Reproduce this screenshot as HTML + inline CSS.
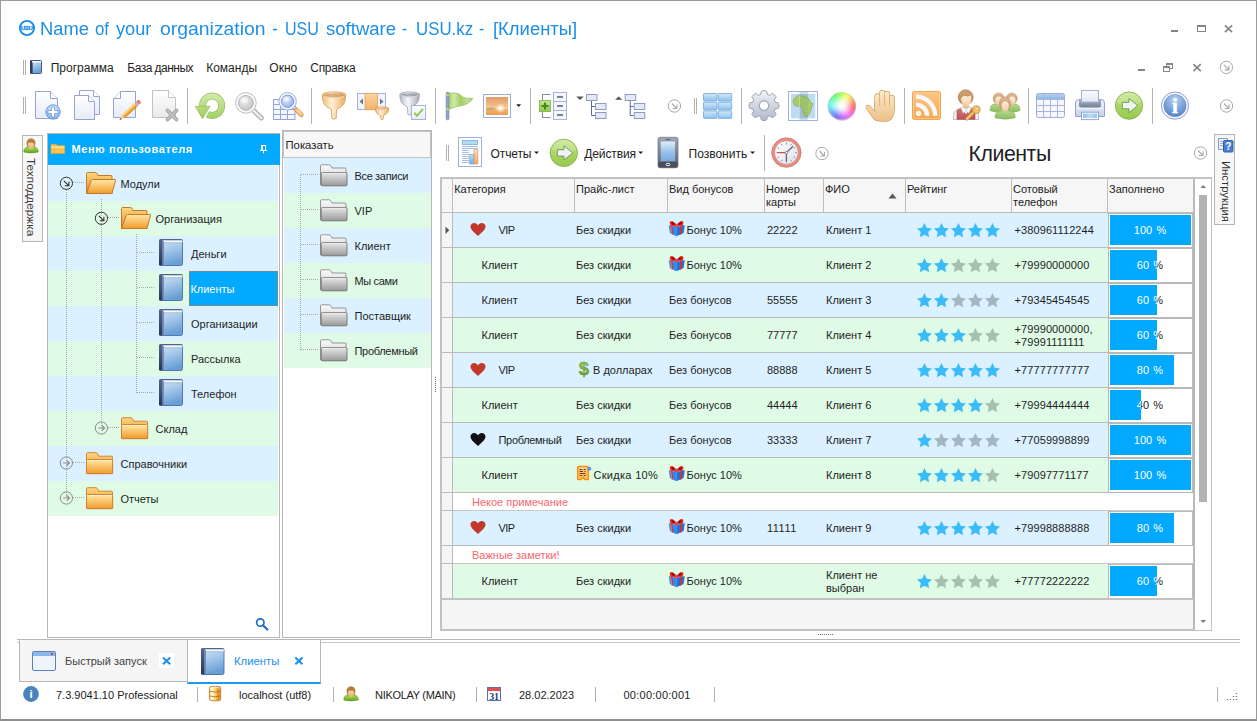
<!DOCTYPE html>
<html lang="ru">
<head>
<meta charset="utf-8">
<title>USU software - Клиенты</title>
<style>
*{box-sizing:border-box;margin:0;padding:0}
html,body{width:1257px;height:721px;overflow:hidden;background:#fff}
body{position:relative;font-family:"Liberation Sans",sans-serif;font-size:11px;color:#222;line-height:13px}
.a{position:absolute}
.t{position:absolute;white-space:nowrap}
svg{position:absolute;overflow:visible}
#win{left:0;top:0;width:1257px;height:721px;border:1px solid #9b9b9b;border-bottom:2px solid #8f8f8f}
#title{left:39.6px;top:17px;font-size:18.9px;line-height:24px;color:#1c8fe8}
.menu{top:61px;font-size:12px;line-height:14px;color:#1e1e1e}
.vsep{position:absolute;width:1px;background:#b4b4b4}
.grip{position:absolute;width:3px;border-left:1px solid #b0b0b0;border-right:1px solid #b0b0b0}
.tr{position:absolute;left:48px;width:230px;height:35px}
.bl{background:#dbf1ff}
.gr{background:#dffbe5}
.tl{position:absolute;white-space:nowrap;font-size:11px;line-height:13px;color:#1e1e1e}
.sr{position:absolute;left:284px;width:147px;height:35px}
.gh{position:absolute;top:180px;height:33px;background:#f6f6f6;border-right:1px solid #bdbdbd;border-bottom:1px solid #bdbdbd}
.gh span{position:absolute;left:2px;top:3px;font-size:11px;line-height:13px;color:#222;white-space:nowrap}
.row{position:absolute;left:453px;width:741px;border-bottom:1px solid #bbbbbb}
.ind{position:absolute;left:442px;width:11px;background:#f5f5f5;border-right:1px solid #bbbbbb;border-bottom:1px solid #bbbbbb}
.c{position:absolute;white-space:nowrap;font-size:11px;line-height:13px;color:#1e1e1e}
.pc{position:absolute;left:1108px;width:87px;background:#fff;border-left:1px solid #b9b9b9;border-right:3px solid #b9b9b9;border-top:1px solid #b9b9b9}
.pf{position:absolute;left:1110px;height:30px;background:#03a8ff;overflow:hidden}
.pt{position:absolute;left:1109.5px;width:81px;text-align:center;font-size:11px;line-height:13px;color:#222;white-space:nowrap;word-spacing:1.2px}
.pf .pt{left:-.5px;color:#fff}
.note{position:absolute;left:472px;color:#f8666c;font-size:11px;line-height:13px;white-space:nowrap}
.sb{top:687px;font-size:11px;line-height:13px;color:#222}
</style>
</head>
<body>
<div id="win" class="a"></div>
<div id="title" class="t" style="width:540px;height:24px"><span style="position:absolute;left:0.13px;top:0;transform:scaleX(0.9696);transform-origin:0 0">Name</span> <span style="position:absolute;left:55.20px;top:0;transform:scaleX(0.8906);transform-origin:0 0">of</span> <span style="position:absolute;left:76.60px;top:0;transform:scaleX(0.9628);transform-origin:0 0">your</span> <span style="position:absolute;left:120.30px;top:0;transform:scaleX(1.0262);transform-origin:0 0">organization</span> <span style="position:absolute;left:232.10px;top:0;transform:scaleX(0.9333);transform-origin:0 0">-</span> <span style="position:absolute;left:245.15px;top:0;transform:scaleX(0.8498);transform-origin:0 0">USU</span> <span style="position:absolute;left:286.40px;top:0;transform:scaleX(0.9818);transform-origin:0 0">software</span> <span style="position:absolute;left:362.40px;top:0;transform:scaleX(0.8333);transform-origin:0 0">-</span> <span style="position:absolute;left:375.91px;top:0;transform:scaleX(0.8917);transform-origin:0 0">USU.kz</span> <span style="position:absolute;left:439.80px;top:0;transform:scaleX(0.8333);transform-origin:0 0">-</span> <span style="position:absolute;left:453.02px;top:0;transform:scaleX(0.9751);transform-origin:0 0">[Клиенты]</span></div>
<div class="grip" style="left:23px;top:60px;height:15px"></div>
<div class="t menu" style="left:50.7px;top:61px;">Программа</div>
<div class="t menu" style="left:127.3px;top:61px;letter-spacing:-.5px;word-spacing:-.2px">База данных</div>
<div class="t menu" style="left:206.2px;top:61px;">Команды</div>
<div class="t menu" style="left:269.3px;top:61px;">Окно</div>
<div class="t menu" style="left:310.3px;top:61px;letter-spacing:-.3px">Справка</div>
<div class="grip" style="left:23px;top:97px;height:17px"></div>
<div class="grip" style="left:694px;top:98px;height:16px"></div>
<div class="vsep" style="left:187px;top:88px;height:36px"></div>
<div class="vsep" style="left:311px;top:88px;height:36px"></div>
<div class="vsep" style="left:435px;top:88px;height:36px"></div>
<div class="vsep" style="left:530px;top:88px;height:36px"></div>
<div class="vsep" style="left:741px;top:88px;height:36px"></div>
<div class="vsep" style="left:904px;top:88px;height:36px"></div>
<div class="vsep" style="left:1028px;top:88px;height:36px"></div>
<div class="vsep" style="left:1152px;top:88px;height:36px"></div>
<div class="a" style="left:22px;top:135px;width:21px;height:107px;border:1px solid #b4b4b4;background:#f7f7f7"></div>
<div class="t" style="left:20px;top:158px;width:21px;height:80px;writing-mode:vertical-rl;font-size:11.800px;line-height:21px;color:#3c3c3c">Техподдержка</div>
<div class="a" style="left:47px;top:133px;width:233px;height:505px;border:1px solid #b7b7b7;background:#fff"></div>
<div class="a" style="left:48px;top:134px;width:232px;height:31px;background:#03a8ff"></div>
<div class="t " style="left:71.5px;top:142.5px;color:#fff;font-weight:bold;font-size:11px;line-height:13px;letter-spacing:.62px">Меню пользователя</div>
<div class="tr bl" style="top:166px"></div>
<div class="tr gr" style="top:201px"></div>
<div class="tr bl" style="top:236px"></div>
<div class="tr gr" style="top:271px"></div>
<div class="tr bl" style="top:306px"></div>
<div class="tr gr" style="top:341px"></div>
<div class="tr bl" style="top:376px"></div>
<div class="tr gr" style="top:411px"></div>
<div class="tr bl" style="top:446px"></div>
<div class="tr gr" style="top:481px"></div>
<div class="tl" style="left:120.5px;top:178px">Модули</div>
<div class="tl" style="left:155.5px;top:213px">Организация</div>
<div class="tl" style="left:191px;top:248px">Деньги</div>
<div class="a" style="left:189px;top:271px;width:89px;height:35px;background:#03a8ff;border:1px dotted #e8641c"></div>
<div class="tl" style="left:190.4px;top:283px;color:#fff">Клиенты</div>
<div class="tl" style="left:191px;top:318px">Организации</div>
<div class="tl" style="left:191px;top:353px">Рассылка</div>
<div class="tl" style="left:191px;top:388px">Телефон</div>
<div class="tl" style="left:155.5px;top:423px">Склад</div>
<div class="tl" style="left:120.5px;top:458px">Справочники</div>
<div class="tl" style="left:120.5px;top:493px">Отчеты</div>
<div class="a" style="left:282px;top:130px;width:150px;height:508px;border:1px solid #b7b7b7;background:#fff"></div>
<div class="a" style="left:283px;top:131px;width:148px;height:27px;border:1px solid #c4c4c4;background:#f7f7f7"></div>
<div class="t " style="left:285.5px;top:139px;font-size:11.300px;line-height:13px;color:#222">Показать</div>
<div class="sr bl" style="top:158px"></div>
<div class="sr gr" style="top:193px"></div>
<div class="sr bl" style="top:228px"></div>
<div class="sr gr" style="top:263px"></div>
<div class="sr bl" style="top:298px"></div>
<div class="sr gr" style="top:333px"></div>
<div class="tl" style="left:354.500px;top:170px;letter-spacing:-.3px;word-spacing:-.2px">Все записи</div>
<div class="tl" style="left:354.500px;top:205px;">VIP</div>
<div class="tl" style="left:354.500px;top:240px;">Клиент</div>
<div class="tl" style="left:354.500px;top:275px;letter-spacing:-.3px;word-spacing:-.2px">Мы сами</div>
<div class="tl" style="left:354.500px;top:310px;">Поставщик</div>
<div class="tl" style="left:354.500px;top:345px;letter-spacing:-.3px;word-spacing:-.2px">Проблемный</div>
<div class="grip" style="left:446px;top:145px;height:16px"></div>
<div class="t " style="left:490.5px;top:146.5px;font-size:12px;line-height:14px;color:#222;letter-spacing:-.1px">Отчеты</div>
<div class="t " style="left:584.3px;top:146.5px;font-size:12px;line-height:14px;color:#222;letter-spacing:-.12px">Действия</div>
<div class="t " style="left:688.5px;top:146.5px;font-size:12px;line-height:14px;color:#222">Позвонить</div>
<div class="vsep" style="left:764px;top:135px;height:36px"></div>
<div class="t " style="left:968.5px;top:141px;font-size:21.300px;line-height:26px;color:#222;letter-spacing:-.45px">Клиенты</div>
<div class="a" style="left:1214px;top:134px;width:21px;height:91px;border:1px solid #b4b4b4;background:#f7f7f7"></div>
<div class="t" style="left:1215px;top:161px;width:21px;height:70px;writing-mode:vertical-rl;font-size:11.3px;line-height:21px;color:#333">Инструкция</div>
<div class="a" style="left:440px;top:177px;width:772px;height:454px;border:2px solid #c2c2c2;border-right-width:1px;background:#f5f5f5"></div>
<div class="a" style="left:442px;top:179px;width:11px;height:34px;background:#f6f6f6;border-right:1px solid #bdbdbd;border-bottom:1px solid #bdbdbd"></div>
<div class="gh" style="left:453px;width:122px;top:179px;height:34px"><span style="top:4px;left:1.2px">Категория</span></div>
<div class="gh" style="left:575px;width:93px;top:179px;height:34px"><span style="top:4px;left:1px">Прайс-лист</span></div>
<div class="gh" style="left:668px;width:97px;top:179px;height:34px"><span style="top:4px;left:1px">Вид бонусов</span></div>
<div class="gh" style="left:765px;width:59px;top:179px;height:34px"><span style="top:4px;left:1px">Номер<br>карты</span></div>
<div class="gh" style="left:824px;width:82px;top:179px;height:34px"><span style="top:4px;left:1px">ФИО</span></div>
<div class="gh" style="left:906px;width:106px;top:179px;height:34px"><span style="top:4px;left:1px">Рейтинг</span></div>
<div class="gh" style="left:1012px;width:96px;top:179px;height:34px"><span style="top:4px;left:1px">Сотовый<br>телефон</span></div>
<div class="gh" style="left:1108px;width:87px;top:179px;height:34px"><span style="top:4px;left:1px">Заполнено</span></div>
<div class="a" style="left:1195px;top:179px;width:16px;height:451px;background:#fff"></div>
<div class="a" style="left:1199px;top:195px;width:8px;height:307px;background:#b2b2b2"></div>
<div class="row bl" style="top:213px;height:35px"></div>
<div class="ind" style="top:213px;height:35px"></div>
<div class="c" style="left:498.5px;top:224px;letter-spacing:-.6px">VIP</div>
<div class="c" style="left:576px;top:224px;">Без скидки</div>
<div class="c" style="left:686.5px;top:224px">Бонус 10%</div>
<div class="c" style="left:767px;top:224px;">22222</div>
<div class="c" style="left:826px;top:224px">Клиент 1</div>
<div class="c" style="left:1014.500px;top:224px;letter-spacing:.1px">+380961112244</div>
<div class="pc" style="top:213px;height:35px;border-bottom:1px solid #b9b9b9"></div>
<div class="pt" style="top:224px">100 %</div>
<div class="pf" style="top:215px;width:81px"><div class="pt" style="top:9px">100 %</div></div>
<div class="row gr" style="top:248px;height:35px"></div>
<div class="ind" style="top:248px;height:35px"></div>
<div class="c" style="left:481.5px;top:259px;">Клиент</div>
<div class="c" style="left:576px;top:259px;">Без скидки</div>
<div class="c" style="left:686.5px;top:259px">Бонус 10%</div>
<div class="c" style="left:767px;top:259px;"></div>
<div class="c" style="left:826px;top:259px">Клиент 2</div>
<div class="c" style="left:1014.500px;top:259px;letter-spacing:.1px">+79990000000</div>
<div class="pc" style="top:248px;height:35px;border-bottom:1px solid #b9b9b9"></div>
<div class="pt" style="top:259px">60 %</div>
<div class="pf" style="top:250px;width:47.2px"><div class="pt" style="top:9px">60 %</div></div>
<div class="row bl" style="top:283px;height:35px"></div>
<div class="ind" style="top:283px;height:35px"></div>
<div class="c" style="left:481.5px;top:294px;">Клиент</div>
<div class="c" style="left:576px;top:294px;">Без скидки</div>
<div class="c" style="left:669px;top:294px">Без бонусов</div>
<div class="c" style="left:767px;top:294px;">55555</div>
<div class="c" style="left:826px;top:294px">Клиент 3</div>
<div class="c" style="left:1014.500px;top:294px;letter-spacing:.1px">+79345454545</div>
<div class="pc" style="top:283px;height:35px;border-bottom:1px solid #b9b9b9"></div>
<div class="pt" style="top:294px">60 %</div>
<div class="pf" style="top:285px;width:47.2px"><div class="pt" style="top:9px">60 %</div></div>
<div class="row gr" style="top:318px;height:35px"></div>
<div class="ind" style="top:318px;height:35px"></div>
<div class="c" style="left:481.5px;top:329px;">Клиент</div>
<div class="c" style="left:576px;top:329px;">Без скидки</div>
<div class="c" style="left:669px;top:329px">Без бонусов</div>
<div class="c" style="left:767px;top:329px;">77777</div>
<div class="c" style="left:826px;top:329px">Клиент 4</div>
<div class="c" style="left:1014.500px;top:323px;letter-spacing:.1px">+79990000000,<br>+79991111111</div>
<div class="pc" style="top:318px;height:35px;border-bottom:1px solid #b9b9b9"></div>
<div class="pt" style="top:329px">60 %</div>
<div class="pf" style="top:320px;width:47.2px"><div class="pt" style="top:9px">60 %</div></div>
<div class="row bl" style="top:353px;height:35px"></div>
<div class="ind" style="top:353px;height:35px"></div>
<div class="c" style="left:498.5px;top:364px;letter-spacing:-.6px">VIP</div>
<div class="c" style="left:593px;top:364px;">В долларах</div>
<div class="c" style="left:669px;top:364px">Без бонусов</div>
<div class="c" style="left:767px;top:364px;">88888</div>
<div class="c" style="left:826px;top:364px">Клиент 5</div>
<div class="c" style="left:1014.500px;top:364px;letter-spacing:.1px">+77777777777</div>
<div class="pc" style="top:353px;height:35px;border-bottom:1px solid #b9b9b9"></div>
<div class="pt" style="top:364px">80 %</div>
<div class="pf" style="top:355px;width:63.9px"><div class="pt" style="top:9px">80 %</div></div>
<div class="row gr" style="top:388px;height:35px"></div>
<div class="ind" style="top:388px;height:35px"></div>
<div class="c" style="left:481.5px;top:399px;">Клиент</div>
<div class="c" style="left:576px;top:399px;">Без скидки</div>
<div class="c" style="left:669px;top:399px">Без бонусов</div>
<div class="c" style="left:767px;top:399px;">44444</div>
<div class="c" style="left:826px;top:399px">Клиент 6</div>
<div class="c" style="left:1014.500px;top:399px;letter-spacing:.1px">+79994444444</div>
<div class="pc" style="top:388px;height:35px;border-bottom:1px solid #b9b9b9"></div>
<div class="pt" style="top:399px">40 %</div>
<div class="pf" style="top:390px;width:30.5px"><div class="pt" style="top:9px">40 %</div></div>
<div class="row bl" style="top:423px;height:35px"></div>
<div class="ind" style="top:423px;height:35px"></div>
<div class="c" style="left:498.5px;top:434px;letter-spacing:-.32px">Проблемный</div>
<div class="c" style="left:576px;top:434px;">Без скидки</div>
<div class="c" style="left:669px;top:434px">Без бонусов</div>
<div class="c" style="left:767px;top:434px;">33333</div>
<div class="c" style="left:826px;top:434px">Клиент 7</div>
<div class="c" style="left:1014.500px;top:434px;letter-spacing:.1px">+77059998899</div>
<div class="pc" style="top:423px;height:35px;border-bottom:1px solid #b9b9b9"></div>
<div class="pt" style="top:434px">100 %</div>
<div class="pf" style="top:425px;width:81px"><div class="pt" style="top:9px">100 %</div></div>
<div class="row gr" style="top:458px;height:35px"></div>
<div class="ind" style="top:458px;height:35px"></div>
<div class="c" style="left:481.5px;top:469px;">Клиент</div>
<div class="c" style="left:593.5px;top:469px;letter-spacing:.3px">Скидка 10%</div>
<div class="c" style="left:686.5px;top:469px">Бонус 10%</div>
<div class="c" style="left:767px;top:469px;"></div>
<div class="c" style="left:826px;top:469px">Клиент 8</div>
<div class="c" style="left:1014.500px;top:469px;letter-spacing:.1px">+79097771177</div>
<div class="pc" style="top:458px;height:35px;border-bottom:1px solid #b9b9b9"></div>
<div class="pt" style="top:469px">100 %</div>
<div class="pf" style="top:460px;width:81px"><div class="pt" style="top:9px">100 %</div></div>
<div class="a" style="left:453px;top:493px;width:741px;height:18px;background:#fff;border-bottom:1px solid #c8c8c8"></div>
<div class="ind" style="top:493px;height:18px"></div>
<div class="note" style="top:496px">Некое примечание</div>
<div class="row bl" style="top:511px;height:35px"></div>
<div class="ind" style="top:511px;height:35px"></div>
<div class="c" style="left:498.5px;top:522px;letter-spacing:-.6px">VIP</div>
<div class="c" style="left:576px;top:522px;">Без скидки</div>
<div class="c" style="left:686.5px;top:522px">Бонус 10%</div>
<div class="c" style="left:767px;top:522px;letter-spacing:.5px">11111</div>
<div class="c" style="left:826px;top:522px">Клиент 9</div>
<div class="c" style="left:1014.500px;top:522px;letter-spacing:.1px">+79998888888</div>
<div class="pc" style="top:511px;height:35px;border-bottom:1px solid #b9b9b9"></div>
<div class="pt" style="top:522px">80 %</div>
<div class="pf" style="top:513px;width:63.9px"><div class="pt" style="top:9px">80 %</div></div>
<div class="a" style="left:453px;top:546px;width:741px;height:18px;background:#fff;border-bottom:1px solid #c8c8c8"></div>
<div class="ind" style="top:546px;height:18px"></div>
<div class="note" style="top:549px">Важные заметки!</div>
<div class="row gr" style="top:564px;height:35px"></div>
<div class="ind" style="top:564px;height:35px"></div>
<div class="c" style="left:481.5px;top:575px;">Клиент</div>
<div class="c" style="left:576px;top:575px;">Без скидки</div>
<div class="c" style="left:686.5px;top:575px">Бонус 10%</div>
<div class="c" style="left:767px;top:575px;"></div>
<div class="c" style="left:826px;top:569px">Клиент не<br>выбран</div>
<div class="c" style="left:1014.500px;top:575px;letter-spacing:.1px">+77772222222</div>
<div class="pc" style="top:564px;height:35px;border-bottom:1px solid #b9b9b9"></div>
<div class="pt" style="top:575px">60 %</div>
<div class="pf" style="top:566px;width:47.2px"><div class="pt" style="top:9px">60 %</div></div>
<div class="a" style="left:1193px;top:179px;width:2px;height:450px;background:#b9b9b9"></div>
<div class="a" style="left:442px;top:598px;width:752px;height:2px;background:#c2c2c2"></div>
<div class="a" style="left:17px;top:639px;width:1223px;height:4px;border-top:1px solid #b8b8b8;border-bottom:1px solid #c8c8c8;background:#fff"></div>
<div class="a" style="left:19px;top:639px;width:169px;height:43px;background:#f5f5f5;border:1px solid #b8b8b8"></div>
<div class="a" style="left:187px;top:639px;width:134px;height:45px;background:#fff;border-top:1px solid #b8b8b8;border-left:1px solid #b8b8b8;border-right:1px solid #b8b8b8;border-bottom:2px solid #1c9af0"></div>
<div class="t " style="left:65px;top:655px;font-size:11px;line-height:13px;color:#444">Быстрый запуск</div>
<div class="a" style="left:159px;top:653px;width:15px;height:15px;background:#fff"></div>
<div class="t " style="left:234px;top:655px;font-size:11.300px;line-height:13px;color:#1c8fe8">Клиенты</div>
<div class="t sb" style="left:56px;top:688.5px;">7.3.9041.10 Professional</div>
<div class="vsep" style="left:197px;top:687px;height:15px;background:#b0b0b0"></div>
<div class="vsep" style="left:333px;top:687px;height:15px;background:#b0b0b0"></div>
<div class="vsep" style="left:476px;top:687px;height:15px;background:#b0b0b0"></div>
<div class="vsep" style="left:595px;top:687px;height:15px;background:#b0b0b0"></div>
<div class="vsep" style="left:714px;top:687px;height:15px;background:#b0b0b0"></div>
<div class="vsep" style="left:1217px;top:687px;height:15px;background:#b0b0b0"></div>
<div class="t sb" style="left:239px;top:688.5px;">localhost (utf8)</div>
<div class="t sb" style="left:375px;top:688.5px;letter-spacing:-.3px">NIKOLAY (MAIN)</div>
<div class="t sb" style="left:519px;top:688.5px;">28.02.2023</div>
<div class="t sb" style="left:623.5px;top:688.5px;letter-spacing:.25px">00:00:00:001</div>
<svg class="a" style="left:0;top:0;pointer-events:none" width="1257" height="721" viewBox="0 0 1257 721">

<defs>
<linearGradient id="gPage" x1="0" y1="0" x2="0" y2="1"><stop offset="0" stop-color="#ffffff"/><stop offset="1" stop-color="#e6ebf8"/></linearGradient>
<linearGradient id="gPageG" x1="0" y1="0" x2="0" y2="1"><stop offset="0" stop-color="#ffffff"/><stop offset="1" stop-color="#e9e9e9"/></linearGradient>
<radialGradient id="gBall" cx="0.5" cy="0.3" r="0.7"><stop offset="0" stop-color="#e0eefc"/><stop offset="1" stop-color="#7eb2e8"/></radialGradient>
<linearGradient id="gGreen" x1="0" y1="0" x2="0" y2="1"><stop offset="0" stop-color="#bfe08a"/><stop offset="1" stop-color="#6ea92e"/></linearGradient>
<linearGradient id="gGreenB" x1="0" y1="0" x2="0" y2="1"><stop offset="0" stop-color="#c4e490"/><stop offset="0.5" stop-color="#9ccc54"/><stop offset="1" stop-color="#86bc3c"/></linearGradient>
<linearGradient id="gFold" x1="0" y1="0" x2="0" y2="1"><stop offset="0" stop-color="#ffe9a8"/><stop offset="1" stop-color="#f39a2a"/></linearGradient>
<linearGradient id="gFoldB" x1="0" y1="0" x2="0" y2="1"><stop offset="0" stop-color="#ffd780"/><stop offset="1" stop-color="#e88a1c"/></linearGradient>
<linearGradient id="gGFold" x1="0" y1="0" x2="0" y2="1"><stop offset="0" stop-color="#e6e6e6"/><stop offset="1" stop-color="#9a9a9a"/></linearGradient>
<linearGradient id="gGFoldB" x1="0" y1="0" x2="0" y2="1"><stop offset="0" stop-color="#fafafa"/><stop offset="1" stop-color="#c8c8c8"/></linearGradient>
<linearGradient id="gBook" x1="0" y1="0" x2="0.3" y2="1"><stop offset="0" stop-color="#d2e4f4"/><stop offset="0.5" stop-color="#a2c6e8"/><stop offset="1" stop-color="#6a9fd6"/></linearGradient>
<linearGradient id="gGold" x1="0" y1="0" x2="1" y2="0"><stop offset="0" stop-color="#f2bc78"/><stop offset="0.4" stop-color="#fff0d6"/><stop offset="1" stop-color="#eeac62"/></linearGradient>
<linearGradient id="gSilver" x1="0" y1="0" x2="1" y2="0"><stop offset="0" stop-color="#b4bcc6"/><stop offset="0.42" stop-color="#f6f8fa"/><stop offset="1" stop-color="#a4acb8"/></linearGradient>
<linearGradient id="gGear" x1="0" y1="0" x2="0" y2="1"><stop offset="0" stop-color="#f2f4f7"/><stop offset="1" stop-color="#b0b8c6"/></linearGradient>
<linearGradient id="gTile" x1="0" y1="0" x2="0" y2="1"><stop offset="0" stop-color="#d4e8f8"/><stop offset="1" stop-color="#8cc0ea"/></linearGradient>
<linearGradient id="gRss" x1="0" y1="0" x2="0" y2="1"><stop offset="0" stop-color="#fcc684"/><stop offset="1" stop-color="#f8a850"/></linearGradient>
<linearGradient id="gSun" x1="0" y1="0" x2="0" y2="1"><stop offset="0" stop-color="#e29c6c"/><stop offset="0.35" stop-color="#eeb280"/><stop offset="0.62" stop-color="#f8cc90"/><stop offset="0.68" stop-color="#eeb06a"/><stop offset="1" stop-color="#eaa050"/></linearGradient>
<linearGradient id="gSkin" x1="0" y1="0" x2="0" y2="1"><stop offset="0" stop-color="#fbe2bd"/><stop offset="1" stop-color="#e8b878"/></linearGradient>
<linearGradient id="gPrn" x1="0" y1="0" x2="0" y2="1"><stop offset="0" stop-color="#f0f4fb"/><stop offset="0.55" stop-color="#dce4f2"/><stop offset="1" stop-color="#c2cee6"/></linearGradient>
<radialGradient id="gInfo" cx="0.5" cy="0.25" r="0.8"><stop offset="0" stop-color="#b4d2f2"/><stop offset="1" stop-color="#4c7cc4"/></radialGradient>
<linearGradient id="gPhone" x1="0" y1="0" x2="0" y2="1"><stop offset="0" stop-color="#e0ecf8"/><stop offset="0.5" stop-color="#9cc4ec"/><stop offset="1" stop-color="#78aae0"/></linearGradient>
<linearGradient id="gTbl" x1="0" y1="0" x2="0" y2="1"><stop offset="0" stop-color="#b0d2ee"/><stop offset="1" stop-color="#86b8e6"/></linearGradient>
<radialGradient id="gLens" cx="0.4" cy="0.35" r="0.7"><stop offset="0" stop-color="#f0f0f0"/><stop offset="1" stop-color="#c2c2c2"/></radialGradient>
<radialGradient id="gLensB" cx="0.4" cy="0.35" r="0.7"><stop offset="0" stop-color="#e0eafc"/><stop offset="1" stop-color="#8cb0ee"/></radialGradient>
<radialGradient id="gWhite" cx="0.5" cy="0.5" r="0.5"><stop offset="0" stop-color="#ffffff" stop-opacity="1"/><stop offset="1" stop-color="#ffffff" stop-opacity="0"/></radialGradient>
<linearGradient id="gPhFrame" x1="0" y1="0" x2="0" y2="1"><stop offset="0" stop-color="#a0a8b4"/><stop offset="1" stop-color="#5a606e"/></linearGradient>
<linearGradient id="gClockF" x1="0" y1="0" x2="1" y2="1"><stop offset="0" stop-color="#ffffff"/><stop offset="1" stop-color="#dcdfe6"/></linearGradient>
<linearGradient id="gDb" x1="0" y1="0" x2="1" y2="0"><stop offset="0" stop-color="#f4d494"/><stop offset="0.22" stop-color="#fffbea"/><stop offset="0.55" stop-color="#fbd254"/><stop offset="0.8" stop-color="#de8c34"/><stop offset="1" stop-color="#f0aa4c"/></linearGradient>
<radialGradient id="gWheelW" cx="0.5" cy="0.5" r="0.5"><stop offset="0" stop-color="#ffffff" stop-opacity="1"/><stop offset="0.3" stop-color="#ffffff" stop-opacity=".85"/><stop offset="0.75" stop-color="#ffffff" stop-opacity=".3"/><stop offset="1" stop-color="#ffffff" stop-opacity=".05"/></radialGradient>
<linearGradient id="gFlag" x1="0" y1="0" x2="1" y2="0"><stop offset="0" stop-color="#a8d470"/><stop offset="0.22" stop-color="#d0eaa8"/><stop offset="0.5" stop-color="#a0cc64"/><stop offset="0.75" stop-color="#c0e090"/><stop offset="1" stop-color="#a4d068"/></linearGradient>
<linearGradient id="gGreenC" gradientUnits="userSpaceOnUse" x1="0" y1="93" x2="0" y2="119"><stop offset="0" stop-color="#d2ecac"/><stop offset="1" stop-color="#a2d060"/></linearGradient>
<linearGradient id="gGreenC2" gradientUnits="userSpaceOnUse" x1="0" y1="93" x2="0" y2="119"><stop offset="0" stop-color="#d2ecac"/><stop offset="1" stop-color="#9ccc58"/></linearGradient>
<linearGradient id="gHand" gradientUnits="userSpaceOnUse" x1="0" y1="90" x2="0" y2="121"><stop offset="0" stop-color="#fdeccc"/><stop offset="1" stop-color="#ecc088"/></linearGradient>
<clipPath id="cpWheel"><circle cx="841.9" cy="105.9" r="13.800"/></clipPath>
<linearGradient id="gDollar" x1="0" y1="0" x2="0" y2="1"><stop offset="0" stop-color="#a4cc6c"/><stop offset="1" stop-color="#5c9426"/></linearGradient>
<linearGradient id="gSpine" x1="0" y1="0" x2="0" y2="1"><stop offset="0" stop-color="#56668a"/><stop offset="1" stop-color="#28365a"/></linearGradient>
<linearGradient id="gBarB" x1="0" y1="0" x2="0" y2="1"><stop offset="0" stop-color="#c4e2f6"/><stop offset="1" stop-color="#6cb0e4"/></linearGradient>
<linearGradient id="gBarO" x1="0" y1="0" x2="0" y2="1"><stop offset="0" stop-color="#fde0c4"/><stop offset="1" stop-color="#f4a468"/></linearGradient>
<linearGradient id="gGreenD" x1="0" y1="0" x2="0" y2="1"><stop offset="0" stop-color="#cce898"/><stop offset="0.5" stop-color="#acd668"/><stop offset="1" stop-color="#96c84c"/></linearGradient>
<linearGradient id="gGreenP" x1="0" y1="0" x2="0" y2="1"><stop offset="0" stop-color="#a4d850"/><stop offset="0.6" stop-color="#84c232"/><stop offset="1" stop-color="#5c9a20"/></linearGradient>
<linearGradient id="gColO" x1="0" y1="0" x2="0" y2="1"><stop offset="0" stop-color="#fad4a4"/><stop offset="1" stop-color="#f2b468"/></linearGradient>
<linearGradient id="gVest" x1="0" y1="0" x2="0" y2="1"><stop offset="0" stop-color="#d47474"/><stop offset="1" stop-color="#c05252"/></linearGradient>
<linearGradient id="gHair" x1="0" y1="0" x2="0" y2="1"><stop offset="0" stop-color="#d4a478"/><stop offset="1" stop-color="#b8824e"/></linearGradient>
<linearGradient id="gHair2" x1="0" y1="0" x2="0" y2="1"><stop offset="0" stop-color="#e0b890"/><stop offset="1" stop-color="#c8986c"/></linearGradient>
<linearGradient id="gSkin2" x1="0" y1="0" x2="0" y2="1"><stop offset="0" stop-color="#fdeedc"/><stop offset="1" stop-color="#f2cca4"/></linearGradient>
<linearGradient id="gGreenU" x1="0" y1="0" x2="0" y2="1"><stop offset="0" stop-color="#b4d88c"/><stop offset="1" stop-color="#8cbc5c"/></linearGradient>
<linearGradient id="gSlot" x1="0" y1="0" x2="0" y2="1"><stop offset="0" stop-color="#a8b0c4"/><stop offset="1" stop-color="#767e96"/></linearGradient>
<linearGradient id="gPaper" x1="0" y1="0" x2="0" y2="1"><stop offset="0" stop-color="#fafbfe"/><stop offset="1" stop-color="#e4e8f2"/></linearGradient>
<linearGradient id="gTray" x1="0" y1="0" x2="1" y2="0"><stop offset="0" stop-color="#8cc4ee"/><stop offset="0.5" stop-color="#b8dcf6"/><stop offset="1" stop-color="#8cc4ee"/></linearGradient>
<filter id="fBlur" x="-10%" y="-10%" width="120%" height="120%"><feGaussianBlur stdDeviation="1.6"/></filter></defs>
<circle cx="27" cy="28" r="7.1" fill="#fff" stroke="#1c8fe8" stroke-width="1.9"/><text x="26.6" y="30.25" text-anchor="middle" font-family="Liberation Sans, sans-serif" font-weight="bold" font-size="6" fill="#1c8fe8" stroke="#1c8fe8" stroke-width=".35" letter-spacing="-.35">USU</text>
<rect x="1171" y="30" width="7" height="2" fill="#848484"/><rect x="1197.500" y="26" width="8" height="5.500" fill="none" stroke="#848484" stroke-width="1"/><rect x="1197" y="25" width="9" height="2" fill="#848484"/><path d="M1224.900,25.400l7.200,6.700M1232.100,25.400l-7.200,6.700" stroke="#848484" stroke-width="1.600"/>
<rect x="1138" y="69" width="7" height="2" fill="#868686"/><rect x="1166.500" y="64.500" width="6" height="4" fill="#fff" stroke="#868686"/><rect x="1166" y="63" width="7" height="2" fill="#868686"/><rect x="1163.500" y="67.500" width="6" height="4" fill="#fff" stroke="#868686"/><rect x="1163" y="66" width="7" height="2" fill="#868686"/><path d="M1193.400,64.200l7.400,7M1200.800,64.200l-7.400,7" stroke="#848484" stroke-width="1.600"/>
<rect x="30.500" y="60.500" width="11" height="13" rx="1" fill="url(#gBook)" stroke="#3a5a90"/><rect x="30" y="60.500" width="2.600" height="13" fill="#2c3a5e"/><rect x="32" y="61" width="9" height="1.500" fill="#f0f6fc"/>
<path d="M35.5,91.5h15l7,7v20h-22z" fill="url(#gPage)" stroke="#98a4d0"/><path d="M50.5,91.5v7h7" fill="#fff" stroke="#98a4d0"/>
<circle cx="53" cy="112" r="7.2" fill="url(#gBall)" stroke="#6f9cd8"/><path d="M53,108.300v7.400M49.300,112h7.400" stroke="#5f92d8" stroke-width="3.800" stroke-linecap="round"/><path d="M53,108.300v7.400M49.300,112h7.400" stroke="#fff" stroke-width="2.300" stroke-linecap="round"/><path d="M53,108v8M49,112h8" stroke="#5f8fd0" stroke-width="3.6" stroke-linecap="round" opacity=".0"/>
<path d="M79.5,90.5h14l6,6v18h-20z" fill="url(#gPage)" stroke="#98a4d0"/><path d="M93.5,90.5v6h6" fill="#fff" stroke="#98a4d0"/>
<path d="M74.5,95.5h14l6,6v18h-20z" fill="url(#gPage)" stroke="#98a4d0"/><path d="M88.5,95.5v6h6" fill="#fff" stroke="#98a4d0"/>
<path d="M120.5,91.5h15v26h-22v-19z" fill="url(#gPage)" stroke="#98a4d0"/><path d="M120.5,91.5v7h-7" fill="#fff" stroke="#98a4d0"/>
<g transform="translate(119.5,120) rotate(-43)"><path d="M0,0L5,-2.200V2.200z" fill="#ecd0a4"/><path d="M0,0L2,-.9V.9z" fill="#444"/><rect x="5" y="-2.200" width="17.500" height="4.400" fill="#f4b448"/><rect x="5" y="-2.200" width="17.500" height="1.500" fill="#ffdc88"/><rect x="5" y=".800" width="17.500" height="1.400" fill="#dc902c"/><rect x="22.500" y="-2.200" width="2.200" height="4.400" fill="#a4b8d4"/><rect x="24.700" y="-2.200" width="3.200" height="4.400" rx="1" fill="#e87878"/></g>
<path d="M152.5,90.5h16l7,7v20h-23z" fill="url(#gPageG)" stroke="#c2c2c2"/><path d="M168.5,90.5v7h7" fill="#fff" stroke="#c2c2c2"/>
<path d="M167.5,110.5l9,9M176.5,110.5l-9,9" stroke="#a0a0a0" stroke-width="3.800" stroke-linecap="round"/><path d="M167.5,110.5l9,9M176.5,110.5l-9,9" stroke="#c0c0c0" stroke-width="2" stroke-linecap="round"/>
<path d="M202.450,106.500V105.700A9.650,9.650 0 1,1 207.500,114.200" fill="none" stroke="#90bc5c" stroke-width="6.900"/><path d="M202.450,106.500V105.700A9.650,9.650 0 1,1 207.500,114.200" fill="none" stroke="url(#gGreenC)" stroke-width="5.600"/><path d="M195.200,106.300h14.800l-7.500,12.500z" fill="url(#gGreenC2)" stroke="#90bc5c" stroke-width=".7" stroke-linejoin="round"/>
<path d="M253,110l8.300,8" stroke="#9c9c9c" stroke-width="4.800" stroke-linecap="round"/><path d="M253,110l8.300,8" stroke="#ececec" stroke-width="3" stroke-linecap="round"/><path d="M254.500,109.500l7.500,7.200" stroke="#c4c4c4" stroke-width=".8"/><circle cx="245.900" cy="102.900" r="10.300" fill="#fbfbfb" stroke="#b4b4b4" stroke-width=".9"/><circle cx="245.900" cy="102.900" r="7.400" fill="url(#gLens)" stroke="#b0b0b0" stroke-width=".9"/><ellipse cx="244.300" cy="100.300" rx="3.600" ry="2.800" fill="#fff" opacity=".55"/>
<rect x="273.500" y="99.500" width="21.500" height="20" fill="#f4f6fd" stroke="#98a4d4"/><path d="M273.500,104.500h21.500M273.500,109.500h21.500M273.500,114.500h21.500M280.500,99.500v20M287.500,99.500v20" stroke="#98a4d4" stroke-width="1"/><path d="M293.500,107l3,3" stroke="#8ea0d0" stroke-width="3.400"/><path d="M293.500,107l3,3" stroke="#f4f6fd" stroke-width="1.800"/><path d="M296.300,109.800l5,5" stroke="#d89850" stroke-width="4.600" stroke-linecap="round"/><path d="M296.500,110l4.700,4.700" stroke="#f8c888" stroke-width="2.800" stroke-linecap="round"/><path d="M297.500,109.600l4.300,4.300" stroke="#fff0dc" stroke-width=".9" stroke-linecap="round"/><circle cx="287.600" cy="101.300" r="8.700" fill="#f6f8fe" stroke="#98a4d4" stroke-width=".9"/><circle cx="287.600" cy="101.300" r="6.200" fill="url(#gLensB)" stroke="#7c94d4" stroke-width=".9"/><ellipse cx="286.200" cy="99.200" rx="3" ry="2.400" fill="#fff" opacity=".6"/>
<path d="M322.3,94.86099999999999C322.3,106.0384 327.3388,106.76032 331.438,109.648L331.83799999999997,118.39999999999999q2.162,1.600 4.324,0L336.562,109.648C340.6612,106.76032 345.7,106.0384 345.7,94.86099999999999z" fill="url(#gGold)" stroke="#d49850" stroke-width=".8"/><ellipse cx="334.0" cy="94.86099999999999" rx="11.7" ry="2.961" fill="url(#gGold)" stroke="#d49850" stroke-width=".8"/><ellipse cx="334.0" cy="95.16099999999999" rx="10.2" ry="1.9609999999999999" fill="#c48a48" opacity=".6"/><path d="M323.40000000000003,95.46099999999998A10.6,2.561 0 0,0 344.59999999999997,95.46099999999998" fill="none" stroke="#fff" stroke-width=".8" opacity=".75"/>
<rect x="357.5" y="93.5" width="28" height="16" fill="#f2f5fc" stroke="#a4b0dc"/><rect x="365" y="93.300" width="12.500" height="16.400" fill="url(#gColO)" stroke="#e0a458" stroke-width=".8"/><path d="M359.500,101.500l3.500,-3v6zM383.500,101.500l-3.500,-3v6z" fill="#6a7488"/>
<path d="M375.5,108.36999999999999C375.5,113.768 378.178,114.12639999999999 380.53,115.56L380.92999999999995,119.19999999999999q1.0699999999999998,1.600 2.1399999999999997,0L383.47,115.56C385.822,114.12639999999999 388.5,113.768 388.5,108.36999999999999z" fill="url(#gGold)" stroke="#d49850" stroke-width=".8"/><ellipse cx="382.0" cy="108.36999999999999" rx="6.5" ry="1.47" fill="url(#gGold)" stroke="#d49850" stroke-width=".8"/><ellipse cx="382.0" cy="108.66999999999999" rx="5.0" ry="0.47" fill="#c48a48" opacity=".6"/><path d="M376.6,108.96999999999998A5.4,1.0699999999999998 0 0,0 387.4,108.96999999999998" fill="none" stroke="#fff" stroke-width=".8" opacity=".75"/>
<path d="M399.9,94.41999999999999C399.9,103.88799999999999 404.03079999999994,104.5024 407.45799999999997,106.96L407.85799999999995,114.19999999999999q1.742,1.600 3.484,0L411.74199999999996,106.96C415.1692,104.5024 419.29999999999995,103.88799999999999 419.29999999999995,94.41999999999999z" fill="url(#gSilver)" stroke="#98a0ac" stroke-width=".8"/><ellipse cx="409.59999999999997" cy="94.41999999999999" rx="9.7" ry="2.52" fill="url(#gSilver)" stroke="#98a0ac" stroke-width=".8"/><ellipse cx="409.59999999999997" cy="94.71999999999998" rx="8.2" ry="1.52" fill="#7c8690" opacity=".6"/><path d="M401.0,95.01999999999998A8.6,2.12 0 0,0 418.19999999999993,95.01999999999998" fill="none" stroke="#fff" stroke-width=".8" opacity=".75"/>
<rect x="411.5" y="105.5" width="14" height="14" fill="url(#gPage)" stroke="#a8b4dc"/><path d="M414.200,112.800l2.800,3l6,-7" fill="none" stroke="#94cc50" stroke-width="2"/>
<path d="M448.800,93.300C452,92.700 456,92.900 458.600,93.800C460.400,94.600 461.400,96.200 463,97.200C466,98.600 469.500,98.400 472.900,98.300C471,101 468.800,103.200 465.500,104.600C462,106 459,106 456,106.800C453.500,107.500 451,108.600 448.800,109.400z" fill="url(#gFlag)" stroke="#92c060" stroke-width=".7"/><rect x="446.200" y="92.200" width="2.700" height="27.600" rx="1.200" fill="#94a2c4" stroke="#6a7aa0" stroke-width=".6"/><rect x="446.200" y="94.300" width="2.700" height="1.600" fill="#c4e070"/><rect x="446.200" y="108.400" width="2.700" height="1.600" fill="#c4e070"/>
<rect x="483.500" y="94.500" width="27" height="23" fill="#fff" stroke="#a0acd4"/><rect x="486" y="97" width="22" height="18" fill="url(#gSun)"/><path d="M486,108.300q5,-1.300 10,.2q-5,1.300 -10,.6z" fill="#7a5a3c" opacity=".75"/><rect x="486" y="108.400" width="22" height=".8" fill="#fff2d0" opacity=".6"/><circle cx="500.400" cy="108.300" r="5" fill="url(#gWhite)"/><path d="M516.200,104.300h5l-2.500,2.800z" fill="#222"/>
<path d="M550.500,94.500H542.500V100M550.500,117.500H542.500V112" fill="none" stroke="#80889c" stroke-width="1"/><rect x="539.5" y="100.5" width="11" height="11" fill="url(#gGreenD)" stroke="#8cba50"/><path d="M545,102.500v7M541.500,106h7" stroke="#448c20" stroke-width="2"/>
<rect x="553.5" y="92.5" width="13" height="9" fill="#f4f6fc" stroke="#a8b4dc"/><path d="M557,97.0h6" stroke="#5a6478" stroke-width="1.6"/>
<rect x="553.5" y="101.5" width="13" height="9" fill="#f4f6fc" stroke="#a8b4dc"/><path d="M557,106.0h6" stroke="#5a6478" stroke-width="1.6"/>
<rect x="553.5" y="110.5" width="13" height="9" fill="#f4f6fc" stroke="#a8b4dc"/><path d="M557,115.0h6" stroke="#5a6478" stroke-width="1.6"/>
<path d="M576.3,96.5h7.4l-3.7,3.4z" fill="#555"/>
<path d="M591.5,100.5V115.5H595M591.5,106.5H595" fill="none" stroke="#5a6a98" stroke-width="1"/>
<rect x="586.5" y="94.5" width="10.5" height="6" fill="#e4e9f6" stroke="#8e9bc6"/>
<rect x="595.5" y="103.5" width="10.5" height="6" fill="#e4e9f6" stroke="#8e9bc6"/>
<rect x="595.5" y="112.5" width="10.5" height="6" fill="#e4e9f6" stroke="#8e9bc6"/>
<path d="M615.0,99.8h7.4l-3.7,-3.4z" fill="#555"/>
<path d="M630.2,100.5V115.5H633.7M630.2,106.5H633.7" fill="none" stroke="#5a6a98" stroke-width="1"/>
<rect x="625.2" y="94.5" width="10.5" height="6" fill="#e4e9f6" stroke="#8e9bc6"/>
<rect x="634.2" y="103.5" width="10.5" height="6" fill="#e4e9f6" stroke="#8e9bc6"/>
<rect x="634.2" y="112.5" width="10.5" height="6" fill="#e4e9f6" stroke="#8e9bc6"/>
<circle cx="674.4" cy="106" r="6.2" fill="#fff" stroke="#a8a8a8" stroke-width="1"/><path d="M671.9,103.5L676.6999999999999,108.3M672.8,108.5H676.9V104.4" fill="none" stroke="#a8a8a8" stroke-width="1.1"/>
<rect x="703.5" y="93.5" width="13.5" height="7.5" rx=".8" fill="url(#gTile)" stroke="#80b2e2"/>
<rect x="718.2" y="93.5" width="13.5" height="7.5" rx=".8" fill="url(#gTile)" stroke="#80b2e2"/>
<rect x="703.5" y="102.2" width="13.5" height="7.5" rx=".8" fill="url(#gTile)" stroke="#80b2e2"/>
<rect x="718.2" y="102.2" width="13.5" height="7.5" rx=".8" fill="url(#gTile)" stroke="#80b2e2"/>
<rect x="703.5" y="110.9" width="13.5" height="7.5" rx=".8" fill="url(#gTile)" stroke="#80b2e2"/>
<rect x="718.2" y="110.9" width="13.5" height="7.5" rx=".8" fill="url(#gTile)" stroke="#80b2e2"/>
<path d="M760.71,94.37L761.18,91.68L762.06,90.73L765.94,90.73L766.82,91.68L767.29,94.37L769.61,95.33L771.85,93.76L773.14,93.71L775.89,96.46L775.84,97.75L774.27,99.99L775.23,102.31L777.92,102.78L778.87,103.66L778.87,107.54L777.92,108.42L775.23,108.89L774.27,111.21L775.84,113.45L775.89,114.74L773.14,117.49L771.85,117.44L769.61,115.87L767.29,116.83L766.82,119.52L765.94,120.47L762.06,120.47L761.18,119.52L760.71,116.83L758.39,115.87L756.15,117.44L754.86,117.49L752.11,114.74L752.16,113.45L753.73,111.21L752.77,108.89L750.08,108.42L749.13,107.54L749.13,103.66L750.08,102.78L752.77,102.31L753.73,99.99L752.16,97.75L752.11,96.46L754.86,93.71L756.15,93.76L758.39,95.33zM768.6,105.6a4.6,4.6 0 1,0 -9.2,0a4.6,4.6 0 1,0 9.2,0z" fill="url(#gGear)" stroke="#9098b0" stroke-width=".9" fill-rule="evenodd" stroke-linejoin="round"/><circle cx="764" cy="105.6" r="5.600" fill="none" stroke="#a4acc0" stroke-width=".6" opacity=".7"/>
<rect x="788.500" y="91.500" width="29" height="29" fill="#fff" stroke="#a4b0dc"/><rect x="791" y="94" width="24.300" height="24.300" fill="#bcdcf2"/><rect x="799" y="92" width="8.800" height="28" fill="#88a8d0" opacity=".4"/><path d="M798.500,95.200L793.700,98.700L793,101.900L794.300,105.100L797.500,106.400L801,106.400L802.600,108.300L803.200,111.500L803.900,114.700L805.500,116.600L807.700,115.900L809.600,113.400L810.900,110.200L811.500,107L813.100,103.800L810.900,102.900L809,99.400L807.700,97.500L803.900,96.800L801.300,95.900z" fill="#a6ca70" stroke="#84ae50" stroke-width=".7" stroke-linejoin="round"/><rect x="799" y="94" width="8.800" height="24.300" fill="#4c7c30" opacity=".1"/><rect x="799" y="92" width="1" height="28" fill="#fff" opacity=".35"/>
<circle cx="841.9" cy="106.5" r="14.3" fill="#c8c8d0"/><g clip-path="url(#cpWheel)"><g filter="url(#fBlur)"><path d="M841.9,105.9L855.90,105.90A14,14 0 0,1 855.61,108.74z" fill="#ff3d4d"/><path d="M841.9,105.9L855.69,108.33A14,14 0 0,1 854.91,111.08z" fill="#ff3d6d"/><path d="M841.9,105.9L855.06,110.69A14,14 0 0,1 853.81,113.26z" fill="#ff3d8d"/><path d="M841.9,105.9L854.02,112.90A14,14 0 0,1 852.35,115.22z" fill="#ff3dae"/><path d="M841.9,105.9L852.62,114.90A14,14 0 0,1 850.57,116.89z" fill="#ff3dce"/><path d="M841.9,105.9L850.90,116.62A14,14 0 0,1 848.53,118.23z" fill="#ff3dee"/><path d="M841.9,105.9L848.90,118.02A14,14 0 0,1 846.29,119.19z" fill="#ee3dff"/><path d="M841.9,105.9L846.69,119.06A14,14 0 0,1 843.92,119.75z" fill="#ce3dff"/><path d="M841.9,105.9L844.33,119.69A14,14 0 0,1 841.48,119.89z" fill="#ae3dff"/><path d="M841.9,105.9L841.90,119.90A14,14 0 0,1 839.06,119.61z" fill="#8d3dff"/><path d="M841.9,105.9L839.47,119.69A14,14 0 0,1 836.72,118.91z" fill="#6d3dff"/><path d="M841.9,105.9L837.11,119.06A14,14 0 0,1 834.54,117.81z" fill="#4d3dff"/><path d="M841.9,105.9L834.90,118.02A14,14 0 0,1 832.58,116.35z" fill="#3d4dff"/><path d="M841.9,105.9L832.90,116.62A14,14 0 0,1 830.91,114.57z" fill="#3d6dff"/><path d="M841.9,105.9L831.18,114.90A14,14 0 0,1 829.57,112.53z" fill="#3d8dff"/><path d="M841.9,105.9L829.78,112.90A14,14 0 0,1 828.61,110.29z" fill="#3daeff"/><path d="M841.9,105.9L828.74,110.69A14,14 0 0,1 828.05,107.92z" fill="#3dceff"/><path d="M841.9,105.9L828.11,108.33A14,14 0 0,1 827.91,105.48z" fill="#3deeff"/><path d="M841.9,105.9L827.90,105.90A14,14 0 0,1 828.19,103.06z" fill="#3dffee"/><path d="M841.9,105.9L828.11,103.47A14,14 0 0,1 828.89,100.72z" fill="#3dffce"/><path d="M841.9,105.9L828.74,101.11A14,14 0 0,1 829.99,98.54z" fill="#3dffae"/><path d="M841.9,105.9L829.78,98.90A14,14 0 0,1 831.45,96.58z" fill="#3dff8d"/><path d="M841.9,105.9L831.18,96.90A14,14 0 0,1 833.23,94.91z" fill="#3dff6d"/><path d="M841.9,105.9L832.90,95.18A14,14 0 0,1 835.27,93.57z" fill="#3dff4d"/><path d="M841.9,105.9L834.90,93.78A14,14 0 0,1 837.51,92.61z" fill="#4dff3d"/><path d="M841.9,105.9L837.11,92.74A14,14 0 0,1 839.88,92.05z" fill="#6dff3d"/><path d="M841.9,105.9L839.47,92.11A14,14 0 0,1 842.32,91.91z" fill="#8dff3d"/><path d="M841.9,105.9L841.90,91.90A14,14 0 0,1 844.74,92.19z" fill="#aeff3d"/><path d="M841.9,105.9L844.33,92.11A14,14 0 0,1 847.08,92.89z" fill="#ceff3d"/><path d="M841.9,105.9L846.69,92.74A14,14 0 0,1 849.26,93.99z" fill="#eeff3d"/><path d="M841.9,105.9L848.90,93.78A14,14 0 0,1 851.22,95.45z" fill="#ffee3d"/><path d="M841.9,105.9L850.90,95.18A14,14 0 0,1 852.89,97.23z" fill="#ffce3d"/><path d="M841.9,105.9L852.62,96.90A14,14 0 0,1 854.23,99.27z" fill="#ffae3d"/><path d="M841.9,105.9L854.02,98.90A14,14 0 0,1 855.19,101.51z" fill="#ff8d3d"/><path d="M841.9,105.9L855.06,101.11A14,14 0 0,1 855.75,103.88z" fill="#ff6d3d"/><path d="M841.9,105.9L855.69,103.47A14,14 0 0,1 855.89,106.32z" fill="#ff4d3d"/></g></g><circle cx="841.9" cy="105.9" r="14" fill="url(#gWheelW)"/>
<path d="M875,103V112L869.800,106.200Q867.800,104.600 866.500,106.200Q865.900,107.600 867,109.200L873.500,118Q876,121 881,121H886Q891,121 892.800,116Q894.300,112 894.300,108V103z" fill="#d4a468" stroke="#d0a060" stroke-width="1.300"/><rect x="875" y="94" width="4.500" height="16" rx="2.250" fill="#d4a468" stroke="#d0a060" stroke-width="1.300"/><rect x="879.900" y="90.400" width="4.500" height="18" rx="2.250" fill="#d4a468" stroke="#d0a060" stroke-width="1.300"/><rect x="884.800" y="91.400" width="4.500" height="17" rx="2.250" fill="#d4a468" stroke="#d0a060" stroke-width="1.300"/><rect x="889.700" y="95.400" width="4.500" height="14" rx="2.250" fill="#d4a468" stroke="#d0a060" stroke-width="1.300"/><g fill="url(#gHand)"><path d="M875,103V112L869.800,106.200Q867.800,104.600 866.500,106.200Q865.900,107.600 867,109.200L873.500,118Q876,121 881,121H886Q891,121 892.800,116Q894.300,112 894.300,108V103z" /><rect x="875" y="94" width="4.500" height="16" rx="2.250" /><rect x="879.900" y="90.400" width="4.500" height="18" rx="2.250" /><rect x="884.800" y="91.400" width="4.500" height="17" rx="2.250" /><rect x="889.700" y="95.400" width="4.500" height="14" rx="2.250" /></g><path d="M879.700,97V106M884.600,95V106M889.500,97V106" stroke="#d8ac70" stroke-width=".8" fill="none"/>
<rect x="912.500" y="91.500" width="28" height="28" rx="1.800" fill="url(#gRss)" stroke="#f0a454"/><rect x="913.500" y="92.500" width="26" height="26" rx="1" fill="none" stroke="#fdd4a0" stroke-width=".8" opacity=".8"/><circle cx="918.600" cy="113.400" r="2.600" fill="#f8f8fc"/><path d="M916,104.600A11.200,11.200 0 0,1 927.200,115.800" fill="none" stroke="#f8f8fc" stroke-width="4.400"/><path d="M916,96.600A19.200,19.200 0 0,1 935.200,115.800" fill="none" stroke="#f8f8fc" stroke-width="4.400"/>
<path d="M953.300,119.500q-.3,-8.500 4.700,-10.300l4.500,-2h7l4.500,2q5,1.800 4.700,10.300z" fill="#f4f4f6" stroke="#a8a8b0" stroke-width=".7"/><path d="M957,119.300v-8.700l4.200,-2.300l4.800,6.500l4.800,-6.500l4.200,2.300v8.700z" fill="url(#gVest)" stroke="#a84848" stroke-width=".6"/><path d="M960.800,108.200l1.600,-1.400l3.600,3.400l3.600,-3.400l1.600,1.400l-2.600,5l-2.600,-2.600l-2.600,2.600z" fill="#fdfdfd" stroke="#b8b8c0" stroke-width=".5"/><path d="M963.200,104v3.400q2.800,2.200 5.600,0v-3.400z" fill="#e8bc94"/><ellipse cx="965.700" cy="97.300" rx="7.500" ry="7.500" fill="url(#gHair)" stroke="#a87444" stroke-width=".6"/><path d="M961,99.500q.5,-3.200 3.500,-3.800q3.500,1.500 6.300,-.2q.8,2.200 .4,4.500q-.4,3.600 -2.400,5.200q-2.600,1.700 -5.200,0q-2.200,-1.800 -2.600,-5.700z" fill="url(#gSkin2)"/><path d="M967,118.800l7.200,-7.200" stroke="#c88c38" stroke-width="3.400" stroke-linecap="round"/><path d="M967,118.800l7.200,-7.200" stroke="#f8cc78" stroke-width="2" stroke-linecap="round"/><circle cx="976.300" cy="109.600" r="3.900" fill="#f6c468" stroke="#c88c38" stroke-width=".8"/><circle cx="977" cy="108.800" r="1.200" fill="#fff" stroke="#c88c38" stroke-width=".5"/>
<path d="M990,110.6C990,105.5 992.5,104 994.25,104L997.25,104C999.0,104 1001.5,105.5 1001.5,110.6Q995.75,113.39999999999999 990,110.6z" fill="url(#gGreenU)" stroke="#84b058" stroke-width=".6"/><path d="M997.0,102.6v2.64q1.600,1 3.200,0v-2.64z" fill="#e8c09c"/><ellipse cx="998.6" cy="98.52" rx="5.4" ry="5.64" fill="url(#gHair2)" stroke="#b88c60" stroke-width=".5"/><ellipse cx="998.8000000000001" cy="100.68" rx="3.4560000000000004" ry="4.08" fill="url(#gSkin2)"/>
<path d="M1008.3,110.6C1008.3,105.5 1010.8,104 1012.65,104L1015.65,104C1017.5,104 1020,105.5 1020,110.6Q1014.15,113.39999999999999 1008.3,110.6z" fill="url(#gGreenU)" stroke="#84b058" stroke-width=".6"/><path d="M1010.1999999999999,102.6v2.64q1.600,1 3.200,0v-2.64z" fill="#e8c09c"/><ellipse cx="1011.8" cy="98.52" rx="5.4" ry="5.64" fill="url(#gHair2)" stroke="#b88c60" stroke-width=".5"/><ellipse cx="1012.0" cy="100.68" rx="3.4560000000000004" ry="4.08" fill="url(#gSkin2)"/>
<path d="M995,117.8C995,112.3 997.5,110.8 1003.6,110.8L1006.6,110.8C1012.7,110.8 1015.2,112.3 1015.2,117.8Q1005.1,120.6 995,117.8z" fill="url(#gGreenU)" stroke="#84b058" stroke-width=".6"/><path d="M1003.4,108.36v3.1239999999999997q1.600,1 3.200,0v-3.1239999999999997z" fill="#e8c09c"/><ellipse cx="1005" cy="103.532" rx="5.7" ry="6.6739999999999995" fill="url(#gHair2)" stroke="#b88c60" stroke-width=".5"/><ellipse cx="1005.2" cy="106.088" rx="3.648" ry="4.828" fill="url(#gSkin2)"/>
<rect x="1036.500" y="93.500" width="28" height="24" rx="1.800" fill="#f6f8fd" stroke="#a0acd8"/><path d="M1037,95q0,-1 1,-1h25q1,0 1,1v4.500h-27z" fill="url(#gTbl)"/><path d="M1036.500,99.500h28M1036.500,105.500h28M1036.500,111.500h28M1043.500,93.500v24M1050.500,93.500v24M1057.500,93.500v24" stroke="#aab6de" stroke-width="1"/>
<path d="M1075.500,116.500V103q0,-3.500 3.500,-3.500h22q3.500,0 3.500,3.500V116.500z" fill="url(#gPrn)" stroke="#98a4cc"/><path d="M1079,100h22v5q0,2.500 -2.500,2.500h-17q-2.500,0 -2.500,-2.500z" fill="url(#gSlot)"/><rect x="1081.500" y="90.500" width="17" height="11.500" fill="url(#gPaper)" stroke="#a8b0d0"/><path d="M1076.500,108.500h27" stroke="#fff" stroke-width="1" opacity=".6"/><rect x="1081.500" y="112.200" width="17" height="7.400" fill="#fdfdff" stroke="#98a4cc"/><rect x="1083" y="113.600" width="14" height="4.400" fill="url(#gTray)"/>
<circle cx="1129" cy="105.600" r="13.700" fill="url(#gGreenD)" stroke="#86b44c" stroke-width=".9"/><path d="M1116.700,102.700a12.500,12.500 0 0,1 24.600,0q-12.300,4.500 -24.600,0z" fill="#fff" opacity=".16"/><path d="M1122.300,102.400h6.700v-3.900l8.800,7.100l-8.800,7.100v-3.900h-6.700z" fill="#f0f2fa" stroke="#6a9a38" stroke-width=".9" stroke-linejoin="round"/>
<circle cx="1175" cy="105.6" r="13.6" fill="#f8f9fd" stroke="#8494cc" stroke-width=".9"/><circle cx="1175" cy="105.6" r="11.2" fill="url(#gInfo)" stroke="#6a88c8" stroke-width=".5"/><text x="1175" y="112.672" text-anchor="middle" font-family="Liberation Serif, serif" font-weight="bold" font-size="21.1" fill="#fff" stroke="#fff" stroke-width=".5">i</text>
<circle cx="1226.5" cy="106" r="6.2" fill="#fff" stroke="#a8a8a8" stroke-width="1"/><path d="M1224.0,103.5L1228.8,108.3M1224.9,108.5H1229.0V104.4" fill="none" stroke="#a8a8a8" stroke-width="1.1"/>
<circle cx="1226.4" cy="67.4" r="6.2" fill="#fff" stroke="#a8a8a8" stroke-width="1"/><path d="M1223.9,64.9L1228.7,69.7M1224.8000000000002,69.9H1228.9V65.80000000000001" fill="none" stroke="#a8a8a8" stroke-width="1.1"/>
<path d="M23.8,152.0q-.2,-4.600 4.800,-5.300h4.800q5,.7 4.800,5.300q-7.200,1.800 -14.400,0z" fill="url(#gGreenP)" stroke="#5a9422" stroke-width=".6"/><path d="M29.2,146.3v2.500q1.800,1.200 3.600,0v-2.500z" fill="#e8b888"/><ellipse cx="31" cy="144.20000000000002" rx="3" ry="4" fill="url(#gSkin)"/><path d="M27.8,146.8q-1.400,-3 -.8,-5.600q1,-2.600 4,-2.600q3,0 4,2.600q.6,2.600 -.8,5.600q.3,-3 -.8,-4.400q-2.600,.5 -4.800,-.5q-.9,1.900 -.8,4.900z" fill="#c07c3c" stroke="#a86428" stroke-width=".4"/>
<path d="M51,153.5v-8.3q0,-1 1,-1h4l1.200,1.300h6.500q1,0 1,1v7z" fill="#ffc24a" stroke="#f0a030" stroke-width=".6"/><rect x="51.300" y="146.500" width="13" height="1.600" fill="#ffe9a8" opacity=".8"/>
<g fill="#fff"><rect x="261" y="145" width="2" height="5"/><rect x="261" y="145" width="5" height="1"/><rect x="265" y="145" width="1" height="5"/><rect x="260" y="150" width="7" height="1"/><rect x="263" y="151" width="1" height="2.400"/></g>
<path d="M66.5,190V498" stroke="#a8a8a8" stroke-width="1" stroke-dasharray="1 1"/>
<path d="M101.5,199V428" stroke="#a8a8a8" stroke-width="1" stroke-dasharray="1 1"/>
<path d="M136.5,234V393" stroke="#a8a8a8" stroke-width="1" stroke-dasharray="1 1"/>
<path d="M73,182.5H84" stroke="#a8a8a8" stroke-width="1" stroke-dasharray="1 1"/>
<circle cx="66.4" cy="183.3" r="6.1" fill="none" stroke="#333" stroke-width="1"/><path d="M63.900000000000006,180.8L68.7,185.60000000000002M64.80000000000001,185.8H68.9V181.70000000000002" fill="none" stroke="#333" stroke-width="1.1"/>
<path d="M86.5,193.5V173.5q0,-1 1,-1h8q1,0 1.5,1l1,2h13q1,0 1,1v17z" fill="url(#gFoldB)" stroke="#c27a2c"/><path d="M86.5,193.5L91.2,180.5q.3,-1 1.3,-1H115q.8,0 .5,1L112,193.5z" fill="url(#gFold)" stroke="#c27a2c"/>
<path d="M108,217.5H119" stroke="#a8a8a8" stroke-width="1" stroke-dasharray="1 1"/>
<circle cx="101.4" cy="218.3" r="6.1" fill="none" stroke="#333" stroke-width="1"/><path d="M98.9,215.8L103.7,220.60000000000002M99.80000000000001,220.8H103.9V216.70000000000002" fill="none" stroke="#333" stroke-width="1.1"/>
<path d="M121.5,228.5V208.5q0,-1 1,-1h8q1,0 1.5,1l1,2h13q1,0 1,1v17z" fill="url(#gFoldB)" stroke="#c27a2c"/><path d="M121.5,228.5L126.2,215.5q.3,-1 1.3,-1H150q.8,0 .5,1L147,228.5z" fill="url(#gFold)" stroke="#c27a2c"/>
<path d="M137,252.5H154" stroke="#a8a8a8" stroke-width="1" stroke-dasharray="1 1"/>
<rect x="159.5" y="239.5" width="23" height="26" rx="1.8" fill="url(#gBook)" stroke="#4a6ca8" stroke-width=".9"/><rect x="159.4" y="239.4" width="23.2" height="1.1" rx=".5" fill="#44546e"/><rect x="162.5" y="240.4" width="19.8" height="2" fill="#f6f9fc"/><rect x="162.5" y="242.4" width="19.8" height=".8" fill="#8eaed0" opacity=".7"/><rect x="159" y="239.4" width="3.6" height="26.2" rx="1.2" fill="url(#gSpine)"/><rect x="162.4" y="241" width="1.5" height="24" fill="#6c88b4"/>
<path d="M137,287.5H154" stroke="#a8a8a8" stroke-width="1" stroke-dasharray="1 1"/>
<rect x="159.5" y="274.5" width="23" height="26" rx="1.8" fill="url(#gBook)" stroke="#4a6ca8" stroke-width=".9"/><rect x="159.4" y="274.4" width="23.2" height="1.1" rx=".5" fill="#44546e"/><rect x="162.5" y="275.4" width="19.8" height="2" fill="#f6f9fc"/><rect x="162.5" y="277.4" width="19.8" height=".8" fill="#8eaed0" opacity=".7"/><rect x="159" y="274.4" width="3.6" height="26.2" rx="1.2" fill="url(#gSpine)"/><rect x="162.4" y="276" width="1.5" height="24" fill="#6c88b4"/>
<path d="M137,322.5H154" stroke="#a8a8a8" stroke-width="1" stroke-dasharray="1 1"/>
<rect x="159.5" y="309.5" width="23" height="26" rx="1.8" fill="url(#gBook)" stroke="#4a6ca8" stroke-width=".9"/><rect x="159.4" y="309.4" width="23.2" height="1.1" rx=".5" fill="#44546e"/><rect x="162.5" y="310.4" width="19.8" height="2" fill="#f6f9fc"/><rect x="162.5" y="312.4" width="19.8" height=".8" fill="#8eaed0" opacity=".7"/><rect x="159" y="309.4" width="3.6" height="26.2" rx="1.2" fill="url(#gSpine)"/><rect x="162.4" y="311" width="1.5" height="24" fill="#6c88b4"/>
<path d="M137,357.5H154" stroke="#a8a8a8" stroke-width="1" stroke-dasharray="1 1"/>
<rect x="159.5" y="344.5" width="23" height="26" rx="1.8" fill="url(#gBook)" stroke="#4a6ca8" stroke-width=".9"/><rect x="159.4" y="344.4" width="23.2" height="1.1" rx=".5" fill="#44546e"/><rect x="162.5" y="345.4" width="19.8" height="2" fill="#f6f9fc"/><rect x="162.5" y="347.4" width="19.8" height=".8" fill="#8eaed0" opacity=".7"/><rect x="159" y="344.4" width="3.6" height="26.2" rx="1.2" fill="url(#gSpine)"/><rect x="162.4" y="346" width="1.5" height="24" fill="#6c88b4"/>
<path d="M137,392.5H154" stroke="#a8a8a8" stroke-width="1" stroke-dasharray="1 1"/>
<rect x="159.5" y="379.5" width="23" height="26" rx="1.8" fill="url(#gBook)" stroke="#4a6ca8" stroke-width=".9"/><rect x="159.4" y="379.4" width="23.2" height="1.1" rx=".5" fill="#44546e"/><rect x="162.5" y="380.4" width="19.8" height="2" fill="#f6f9fc"/><rect x="162.5" y="382.4" width="19.8" height=".8" fill="#8eaed0" opacity=".7"/><rect x="159" y="379.4" width="3.6" height="26.2" rx="1.2" fill="url(#gSpine)"/><rect x="162.4" y="381" width="1.5" height="24" fill="#6c88b4"/>
<path d="M108,427.5H119" stroke="#a8a8a8" stroke-width="1" stroke-dasharray="1 1"/>
<circle cx="101.4" cy="428" r="6.1" fill="none" stroke="#8c8c8c" stroke-width="1"/><path d="M98.2,428H104.4M101.7,425.2L104.5,428L101.7,430.8" fill="none" stroke="#8c8c8c" stroke-width="1.1"/>
<path d="M121.5,438.2V418.7q0,-1 1,-1h8.500q1,0 1.500,1l1.200,2.500H146.5q1,0 1,1V438.2z" fill="url(#gFoldB)" stroke="#cc7c2c" stroke-width=".9"/><path d="M121.5,437.7V425.5q0,-1 1,-1H146.7q1,0 1,1V437.7q0,1 -1,1H122.5q-1,0 -1,-1z" fill="url(#gFold)" stroke="#cc7c2c" stroke-width=".9"/><path d="M122.5,425.5H146.7" stroke="#fff0c8" stroke-width=".9"/>
<path d="M73,462.5H84" stroke="#a8a8a8" stroke-width="1" stroke-dasharray="1 1"/>
<circle cx="66.4" cy="463" r="6.1" fill="none" stroke="#8c8c8c" stroke-width="1"/><path d="M63.2,463H69.4M66.7,460.2L69.5,463L66.7,465.8" fill="none" stroke="#8c8c8c" stroke-width="1.1"/>
<path d="M86.5,473.2V453.7q0,-1 1,-1h8.500q1,0 1.500,1l1.200,2.500H111.5q1,0 1,1V473.2z" fill="url(#gFoldB)" stroke="#cc7c2c" stroke-width=".9"/><path d="M86.5,472.7V460.5q0,-1 1,-1H111.7q1,0 1,1V472.7q0,1 -1,1H87.5q-1,0 -1,-1z" fill="url(#gFold)" stroke="#cc7c2c" stroke-width=".9"/><path d="M87.5,460.5H111.7" stroke="#fff0c8" stroke-width=".9"/>
<path d="M73,497.5H84" stroke="#a8a8a8" stroke-width="1" stroke-dasharray="1 1"/>
<circle cx="66.4" cy="498" r="6.1" fill="none" stroke="#8c8c8c" stroke-width="1"/><path d="M63.2,498H69.4M66.7,495.2L69.5,498L66.7,500.8" fill="none" stroke="#8c8c8c" stroke-width="1.1"/>
<path d="M86.5,508.2V488.7q0,-1 1,-1h8.500q1,0 1.500,1l1.200,2.500H111.5q1,0 1,1V508.2z" fill="url(#gFoldB)" stroke="#cc7c2c" stroke-width=".9"/><path d="M86.5,507.7V495.5q0,-1 1,-1H111.7q1,0 1,1V507.7q0,1 -1,1H87.5q-1,0 -1,-1z" fill="url(#gFold)" stroke="#cc7c2c" stroke-width=".9"/><path d="M87.5,495.5H111.7" stroke="#fff0c8" stroke-width=".9"/>
<circle cx="260.300" cy="622.500" r="3.700" fill="#fff" stroke="#1c6cc8" stroke-width="1.700"/><path d="M263.200,625.500l4.200,4" stroke="#1c6cc8" stroke-width="2.200" stroke-linecap="round"/>
<path d="M300.5,175V351" stroke="#a8a8a8" stroke-width="1" stroke-dasharray="1 1"/>
<path d="M301,174.5H318" stroke="#a8a8a8" stroke-width="1" stroke-dasharray="1 1"/>
<path d="M320.5,184.8V165.8q0,-1 1,-1h7.600q1,0 1.500,.8l1.400,2.400H345q1,0 1,1V184.8z" fill="url(#gGFoldB)" stroke="#8a8a8a" stroke-width=".9"/><path d="M321.2,184.60000000000002V173.70000000000002q0,-1 1,-1H346q1,0 1,1V184.60000000000002q0,1.200 -1,1.200H322.2q-1,0 -1,-1.200z" fill="url(#gGFold)" stroke="#727272" stroke-width=".9"/><path d="M322.2,173.60000000000002H346" stroke="#f4f4f4" stroke-width=".8"/>
<path d="M301,209.5H318" stroke="#a8a8a8" stroke-width="1" stroke-dasharray="1 1"/>
<path d="M320.5,219.8V200.8q0,-1 1,-1h7.600q1,0 1.500,.8l1.400,2.400H345q1,0 1,1V219.8z" fill="url(#gGFoldB)" stroke="#8a8a8a" stroke-width=".9"/><path d="M321.2,219.60000000000002V208.70000000000002q0,-1 1,-1H346q1,0 1,1V219.60000000000002q0,1.200 -1,1.200H322.2q-1,0 -1,-1.200z" fill="url(#gGFold)" stroke="#727272" stroke-width=".9"/><path d="M322.2,208.60000000000002H346" stroke="#f4f4f4" stroke-width=".8"/>
<path d="M301,244.5H318" stroke="#a8a8a8" stroke-width="1" stroke-dasharray="1 1"/>
<path d="M320.5,254.8V235.8q0,-1 1,-1h7.600q1,0 1.500,.8l1.400,2.400H345q1,0 1,1V254.8z" fill="url(#gGFoldB)" stroke="#8a8a8a" stroke-width=".9"/><path d="M321.2,254.60000000000002V243.70000000000002q0,-1 1,-1H346q1,0 1,1V254.60000000000002q0,1.200 -1,1.200H322.2q-1,0 -1,-1.200z" fill="url(#gGFold)" stroke="#727272" stroke-width=".9"/><path d="M322.2,243.60000000000002H346" stroke="#f4f4f4" stroke-width=".8"/>
<path d="M301,279.5H318" stroke="#a8a8a8" stroke-width="1" stroke-dasharray="1 1"/>
<path d="M320.5,289.8V270.8q0,-1 1,-1h7.600q1,0 1.500,.8l1.400,2.400H345q1,0 1,1V289.8z" fill="url(#gGFoldB)" stroke="#8a8a8a" stroke-width=".9"/><path d="M321.2,289.6V278.7q0,-1 1,-1H346q1,0 1,1V289.6q0,1.200 -1,1.200H322.2q-1,0 -1,-1.200z" fill="url(#gGFold)" stroke="#727272" stroke-width=".9"/><path d="M322.2,278.6H346" stroke="#f4f4f4" stroke-width=".8"/>
<path d="M301,314.5H318" stroke="#a8a8a8" stroke-width="1" stroke-dasharray="1 1"/>
<path d="M320.5,324.8V305.8q0,-1 1,-1h7.600q1,0 1.500,.8l1.400,2.400H345q1,0 1,1V324.8z" fill="url(#gGFoldB)" stroke="#8a8a8a" stroke-width=".9"/><path d="M321.2,324.6V313.7q0,-1 1,-1H346q1,0 1,1V324.6q0,1.200 -1,1.200H322.2q-1,0 -1,-1.200z" fill="url(#gGFold)" stroke="#727272" stroke-width=".9"/><path d="M322.2,313.6H346" stroke="#f4f4f4" stroke-width=".8"/>
<path d="M301,349.5H318" stroke="#a8a8a8" stroke-width="1" stroke-dasharray="1 1"/>
<path d="M320.5,359.8V340.8q0,-1 1,-1h7.600q1,0 1.500,.8l1.400,2.400H345q1,0 1,1V359.8z" fill="url(#gGFoldB)" stroke="#8a8a8a" stroke-width=".9"/><path d="M321.2,359.6V348.7q0,-1 1,-1H346q1,0 1,1V359.6q0,1.200 -1,1.200H322.2q-1,0 -1,-1.200z" fill="url(#gGFold)" stroke="#727272" stroke-width=".9"/><path d="M322.2,348.6H346" stroke="#f4f4f4" stroke-width=".8"/>
<path d="M435.500,377v16" stroke="#6a6a6a" stroke-width="1" stroke-dasharray="1 1"/>
<path d="M818,634.500h16" stroke="#6a6a6a" stroke-width="1" stroke-dasharray="1 1"/>
<rect x="458.500" y="137.500" width="23" height="29" fill="#fdfeff" stroke="#a4b0dc"/><rect x="462.500" y="140.500" width="15" height="4" fill="#b4daf2" stroke="#80b4e0" stroke-width=".9"/><path d="M462,146.500h16" stroke="#90a8d8" stroke-width=".8"/><path d="M462,148.500h16M462,150.500h7M462,152.500h7M462,154.500h7M462,156.500h7M462,158.500h7M462,160.500h7M462,162.500h7" stroke="#9cb4e0" stroke-width=".9"/><rect x="469.800" y="154.300" width="3.700" height="9.700" fill="url(#gBarB)" stroke="#6aa4d8" stroke-width=".7"/><rect x="474" y="149.800" width="3.800" height="14.200" fill="url(#gBarO)" stroke="#e8965a" stroke-width=".7"/>
<path d="M534,151.400h5l-2.500,2.700z" fill="#222"/>
<circle cx="563.800" cy="152.900" r="13.700" fill="url(#gGreenD)" stroke="#86b44c" stroke-width=".9"/><path d="M551.500,150a12.500,12.500 0 0,1 24.600,0q-12.300,4.500 -24.600,0z" fill="#fff" opacity=".16"/><path d="M557.300,149.700h6.700v-3.900l8.800,7.100l-8.800,7.100v-3.900h-6.700z" fill="#f0f2fa" stroke="#6a9a38" stroke-width=".9" stroke-linejoin="round"/>
<path d="M638.200,151.400h5l-2.500,2.700z" fill="#222"/>
<rect x="658" y="137.300" width="20" height="30.500" rx="2.200" fill="url(#gPhFrame)" stroke="#6a7080" stroke-width=".7"/><rect x="660.800" y="141.500" width="14.200" height="19.800" fill="url(#gPhone)"/><rect x="658.400" y="161.800" width="19.200" height="5.600" rx="1.500" fill="#4a4e5c"/><ellipse cx="668" cy="164.500" rx="1.900" ry="1.300" fill="none" stroke="#fff" stroke-width=".9"/><rect x="665.500" y="139" width="5" height="1" rx=".5" fill="#5a6070"/>
<path d="M750.100,151.400h5l-2.500,2.700z" fill="#222"/>
<circle cx="786.400" cy="152.600" r="13.300" fill="url(#gClockF)" stroke="#e68e86" stroke-width="2.900"/><circle cx="786.400" cy="152.600" r="14.700" fill="none" stroke="#cc6e66" stroke-width=".7"/><circle cx="786.400" cy="152.600" r="11.800" fill="none" stroke="#c8706a" stroke-width=".5"/><path d="M786.400,152.600H777" stroke="#d84a40" stroke-width="1.200"/><path d="M786.400,152.600L793,146.300M786.400,152.600V161.800" stroke="#5a6478" stroke-width="1.300" fill="none"/><circle cx="786.400" cy="152.600" r="1.300" fill="#fff" stroke="#5a6478" stroke-width=".7"/><path d="M786.400,143v1M786.400,161.800v.5M777,152.600h0M795.500,152.600h1M781.600,144.300l.4,.7M791.200,144.300l-.4,.7M778.100,147.800l.7,.4M794.700,147.800l-.7,.4M778.100,157.400l.7,-.4M794.700,157.400l-.7,-.4M781.600,160.900l.4,-.7M791.200,160.900l-.4,-.7" stroke="#8a8a9a" stroke-width="1" stroke-linecap="round"/>
<circle cx="822" cy="153.5" r="6.2" fill="#fff" stroke="#a8a8a8" stroke-width="1"/><path d="M819.5,151.0L824.3,155.8M820.4,156.0H824.5V151.9" fill="none" stroke="#a8a8a8" stroke-width="1.1"/>
<circle cx="1200.5" cy="153" r="6.2" fill="#fff" stroke="#a8a8a8" stroke-width="1"/><path d="M1198.0,150.5L1202.8,155.3M1198.9,155.5H1203.0V151.4" fill="none" stroke="#a8a8a8" stroke-width="1.1"/>
<rect x="1218.500" y="138.500" width="9" height="11" fill="#eef2fa" stroke="#8e9bc6"/><path d="M1220,141.500h6M1220,143.500h6M1220,145.500h6" stroke="#8e9bc6" stroke-width=".8"/><rect x="1223.500" y="140.500" width="9.500" height="11.500" rx="1" fill="#4a80d0" stroke="#3060a8"/><text x="1228.300" y="150" text-anchor="middle" font-family="Liberation Sans, sans-serif" font-weight="bold" font-size="10" fill="#fff">?</text>
<path d="M888.500,198.500h8l-4,-5z" fill="#555"/>
<path d="M1200.500,188h5.400l-2.700,-3z" fill="#777"/><path d="M1200.500,620h5.400l-2.700,3z" fill="#777"/>
<path d="M478.0,236C472.5,231.5 470.5,229 470.5,226.6C470.5,224.2 472.3,223 474.3,223C475.9,223 477.3,223.9 478.0,225.4C478.7,223.9 480.1,223 481.7,223C483.7,223 485.5,224.2 485.5,226.6C485.5,229 483.5,231.5 478.0,236z" fill="#c0392b"/>
<polygon points="668.8,225.3 676.4,227.0 676.3,236.2 669.9,233.0" fill="#2a8cf6"/><polygon points="676.4,227.0 684.8,225.3 683.6,233.0 676.3,236.2" fill="#1874e0"/><polygon points="668.8,225.3 676.6,223.6 684.8,225.3 676.4,227.4" fill="#3a98fa"/><path d="M671.3,225.4L672.5,234.3" stroke="#f02818" stroke-width="1.700"/><path d="M681.6,225.4L680.4,234.6" stroke="#f02818" stroke-width="1.700"/><path d="M670.7,225.6L671.8,234" stroke="#ffa090" stroke-width=".6"/><path d="M676.6,225.8C674.5,220 669,219.6 669.8,223.6C670.3,226.3 674,226.4 676.6,225.8C679.2,226.4 682.9,226.3 683.4,223.6C684.2,219.6 678.7,220 676.6,225.8z" fill="#f02818"/><path d="M675.2,224.6C673.8,222 671.4,221.6 671.6,223.2C672,224.6 673.6,224.8 675.2,224.6z" fill="#7a1008"/><path d="M678,224.6C679.4,222 681.8,221.6 681.6,223.2C681.2,224.6 679.6,224.8 678,224.6z" fill="#7a1008"/><ellipse cx="676.6" cy="225.6" rx="2.100" ry="1.700" fill="#ff4030"/>
<polygon points="924.45,223.00 926.74,227.74 931.96,228.46 928.16,232.11 929.09,237.29 924.45,234.80 919.81,237.29 920.74,232.11 916.94,228.46 922.16,227.74" fill="#3abcf8"/>
<polygon points="941.45,223.00 943.74,227.74 948.96,228.46 945.16,232.11 946.09,237.29 941.45,234.80 936.81,237.29 937.74,232.11 933.94,228.46 939.16,227.74" fill="#3abcf8"/>
<polygon points="958.45,223.00 960.74,227.74 965.96,228.46 962.16,232.11 963.09,237.29 958.45,234.80 953.81,237.29 954.74,232.11 950.94,228.46 956.16,227.74" fill="#3abcf8"/>
<polygon points="975.45,223.00 977.74,227.74 982.96,228.46 979.16,232.11 980.09,237.29 975.45,234.80 970.81,237.29 971.74,232.11 967.94,228.46 973.16,227.74" fill="#3abcf8"/>
<polygon points="992.45,223.00 994.74,227.74 999.96,228.46 996.16,232.11 997.09,237.29 992.45,234.80 987.81,237.29 988.74,232.11 984.94,228.46 990.16,227.74" fill="#3abcf8"/>
<polygon points="668.8,260.3 676.4,262.0 676.3,271.2 669.9,268.0" fill="#2a8cf6"/><polygon points="676.4,262.0 684.8,260.3 683.6,268.0 676.3,271.2" fill="#1874e0"/><polygon points="668.8,260.3 676.6,258.6 684.8,260.3 676.4,262.4" fill="#3a98fa"/><path d="M671.3,260.4L672.5,269.3" stroke="#f02818" stroke-width="1.700"/><path d="M681.6,260.4L680.4,269.6" stroke="#f02818" stroke-width="1.700"/><path d="M670.7,260.6L671.8,269" stroke="#ffa090" stroke-width=".6"/><path d="M676.6,260.8C674.5,255 669,254.6 669.8,258.6C670.3,261.3 674,261.4 676.6,260.8C679.2,261.4 682.9,261.3 683.4,258.6C684.2,254.6 678.7,255 676.6,260.8z" fill="#f02818"/><path d="M675.2,259.6C673.8,257 671.4,256.6 671.6,258.2C672,259.6 673.6,259.8 675.2,259.6z" fill="#7a1008"/><path d="M678,259.6C679.4,257 681.8,256.6 681.6,258.2C681.2,259.6 679.6,259.8 678,259.6z" fill="#7a1008"/><ellipse cx="676.6" cy="260.6" rx="2.100" ry="1.700" fill="#ff4030"/>
<polygon points="924.45,258.00 926.74,262.74 931.96,263.46 928.16,267.11 929.09,272.29 924.45,269.80 919.81,272.29 920.74,267.11 916.94,263.46 922.16,262.74" fill="#3abcf8"/>
<polygon points="941.45,258.00 943.74,262.74 948.96,263.46 945.16,267.11 946.09,272.29 941.45,269.80 936.81,272.29 937.74,267.11 933.94,263.46 939.16,262.74" fill="#3abcf8"/>
<polygon points="958.45,258.00 960.74,262.74 965.96,263.46 962.16,267.11 963.09,272.29 958.45,269.80 953.81,272.29 954.74,267.11 950.94,263.46 956.16,262.74" fill="#a6c0b0"/>
<polygon points="975.45,258.00 977.74,262.74 982.96,263.46 979.16,267.11 980.09,272.29 975.45,269.80 970.81,272.29 971.74,267.11 967.94,263.46 973.16,262.74" fill="#a6c0b0"/>
<polygon points="992.45,258.00 994.74,262.74 999.96,263.46 996.16,267.11 997.09,272.29 992.45,269.80 987.81,272.29 988.74,267.11 984.94,263.46 990.16,262.74" fill="#a6c0b0"/>
<polygon points="924.45,293.00 926.74,297.74 931.96,298.46 928.16,302.11 929.09,307.29 924.45,304.80 919.81,307.29 920.74,302.11 916.94,298.46 922.16,297.74" fill="#3abcf8"/>
<polygon points="941.45,293.00 943.74,297.74 948.96,298.46 945.16,302.11 946.09,307.29 941.45,304.80 936.81,307.29 937.74,302.11 933.94,298.46 939.16,297.74" fill="#3abcf8"/>
<polygon points="958.45,293.00 960.74,297.74 965.96,298.46 962.16,302.11 963.09,307.29 958.45,304.80 953.81,307.29 954.74,302.11 950.94,298.46 956.16,297.74" fill="#a4b6c0"/>
<polygon points="975.45,293.00 977.74,297.74 982.96,298.46 979.16,302.11 980.09,307.29 975.45,304.80 970.81,307.29 971.74,302.11 967.94,298.46 973.16,297.74" fill="#a4b6c0"/>
<polygon points="992.45,293.00 994.74,297.74 999.96,298.46 996.16,302.11 997.09,307.29 992.45,304.80 987.81,307.29 988.74,302.11 984.94,298.46 990.16,297.74" fill="#a4b6c0"/>
<polygon points="924.45,328.00 926.74,332.74 931.96,333.46 928.16,337.11 929.09,342.29 924.45,339.80 919.81,342.29 920.74,337.11 916.94,333.46 922.16,332.74" fill="#3abcf8"/>
<polygon points="941.45,328.00 943.74,332.74 948.96,333.46 945.16,337.11 946.09,342.29 941.45,339.80 936.81,342.29 937.74,337.11 933.94,333.46 939.16,332.74" fill="#3abcf8"/>
<polygon points="958.45,328.00 960.74,332.74 965.96,333.46 962.16,337.11 963.09,342.29 958.45,339.80 953.81,342.29 954.74,337.11 950.94,333.46 956.16,332.74" fill="#3abcf8"/>
<polygon points="975.45,328.00 977.74,332.74 982.96,333.46 979.16,337.11 980.09,342.29 975.45,339.80 970.81,342.29 971.74,337.11 967.94,333.46 973.16,332.74" fill="#a6c0b0"/>
<polygon points="992.45,328.00 994.74,332.74 999.96,333.46 996.16,337.11 997.09,342.29 992.45,339.80 987.81,342.29 988.74,337.11 984.94,333.46 990.16,332.74" fill="#a6c0b0"/>
<path d="M478.0,376C472.5,371.5 470.5,369 470.5,366.6C470.5,364.2 472.3,363 474.3,363C475.9,363 477.3,363.9 478.0,365.4C478.7,363.9 480.1,363 481.7,363C483.7,363 485.5,364.2 485.5,366.6C485.5,369 483.5,371.5 478.0,376z" fill="#c0392b"/>
<text x="578.8" y="374.7" font-family="Liberation Sans, sans-serif" font-weight="bold" font-size="18.500" fill="url(#gDollar)" stroke="#5a9028" stroke-width=".35">$</text>
<polygon points="924.45,363.00 926.74,367.74 931.96,368.46 928.16,372.11 929.09,377.29 924.45,374.80 919.81,377.29 920.74,372.11 916.94,368.46 922.16,367.74" fill="#3abcf8"/>
<polygon points="941.45,363.00 943.74,367.74 948.96,368.46 945.16,372.11 946.09,377.29 941.45,374.80 936.81,377.29 937.74,372.11 933.94,368.46 939.16,367.74" fill="#3abcf8"/>
<polygon points="958.45,363.00 960.74,367.74 965.96,368.46 962.16,372.11 963.09,377.29 958.45,374.80 953.81,377.29 954.74,372.11 950.94,368.46 956.16,367.74" fill="#3abcf8"/>
<polygon points="975.45,363.00 977.74,367.74 982.96,368.46 979.16,372.11 980.09,377.29 975.45,374.80 970.81,377.29 971.74,372.11 967.94,368.46 973.16,367.74" fill="#3abcf8"/>
<polygon points="992.45,363.00 994.74,367.74 999.96,368.46 996.16,372.11 997.09,377.29 992.45,374.80 987.81,377.29 988.74,372.11 984.94,368.46 990.16,367.74" fill="#3abcf8"/>
<polygon points="924.45,398.00 926.74,402.74 931.96,403.46 928.16,407.11 929.09,412.29 924.45,409.80 919.81,412.29 920.74,407.11 916.94,403.46 922.16,402.74" fill="#3abcf8"/>
<polygon points="941.45,398.00 943.74,402.74 948.96,403.46 945.16,407.11 946.09,412.29 941.45,409.80 936.81,412.29 937.74,407.11 933.94,403.46 939.16,402.74" fill="#3abcf8"/>
<polygon points="958.45,398.00 960.74,402.74 965.96,403.46 962.16,407.11 963.09,412.29 958.45,409.80 953.81,412.29 954.74,407.11 950.94,403.46 956.16,402.74" fill="#3abcf8"/>
<polygon points="975.45,398.00 977.74,402.74 982.96,403.46 979.16,407.11 980.09,412.29 975.45,409.80 970.81,412.29 971.74,407.11 967.94,403.46 973.16,402.74" fill="#3abcf8"/>
<polygon points="992.45,398.00 994.74,402.74 999.96,403.46 996.16,407.11 997.09,412.29 992.45,409.80 987.81,412.29 988.74,407.11 984.94,403.46 990.16,402.74" fill="#a6c0b0"/>
<path d="M478.0,446C472.5,441.5 470.5,439 470.5,436.6C470.5,434.2 472.3,433 474.3,433C475.9,433 477.3,433.9 478.0,435.4C478.7,433.9 480.1,433 481.7,433C483.7,433 485.5,434.2 485.5,436.6C485.5,439 483.5,441.5 478.0,446z" fill="#111"/>
<polygon points="924.45,433.00 926.74,437.74 931.96,438.46 928.16,442.11 929.09,447.29 924.45,444.80 919.81,447.29 920.74,442.11 916.94,438.46 922.16,437.74" fill="#3abcf8"/>
<polygon points="941.45,433.00 943.74,437.74 948.96,438.46 945.16,442.11 946.09,447.29 941.45,444.80 936.81,447.29 937.74,442.11 933.94,438.46 939.16,437.74" fill="#a4b6c0"/>
<polygon points="958.45,433.00 960.74,437.74 965.96,438.46 962.16,442.11 963.09,447.29 958.45,444.80 953.81,447.29 954.74,442.11 950.94,438.46 956.16,437.74" fill="#a4b6c0"/>
<polygon points="975.45,433.00 977.74,437.74 982.96,438.46 979.16,442.11 980.09,447.29 975.45,444.80 970.81,447.29 971.74,442.11 967.94,438.46 973.16,437.74" fill="#a4b6c0"/>
<polygon points="992.45,433.00 994.74,437.74 999.96,438.46 996.16,442.11 997.09,447.29 992.45,444.80 987.81,447.29 988.74,442.11 984.94,438.46 990.16,437.74" fill="#a4b6c0"/>
<path d="M577.7,467.6q0,-1 1,-1h8.600q1,0 1,1V479.6h-3l-2.300,-2.300l-2.300,2.300h-3z" fill="#ffc468" stroke="#ff8c14" stroke-width="1.500" stroke-linejoin="round"/><path d="M579.2,468.3h7.600" stroke="#fff0d0" stroke-width=".9"/><path d="M579.6,469.5h2.600M583.6,469.5h2.200M579.6,471.5h3.400M584.4,471.5h1.200M579.6,473.5h6M579.6,475.5h2.600M583.6,475.5h2.200" stroke="#6a4410" stroke-width="1"/><circle cx="589.4" cy="468.7" r="1.900" fill="#3a90f0"/><circle cx="589.9" cy="468.1" r=".7" fill="#a8d0fa"/>
<polygon points="668.8,470.3 676.4,472.0 676.3,481.2 669.9,478.0" fill="#2a8cf6"/><polygon points="676.4,472.0 684.8,470.3 683.6,478.0 676.3,481.2" fill="#1874e0"/><polygon points="668.8,470.3 676.6,468.6 684.8,470.3 676.4,472.4" fill="#3a98fa"/><path d="M671.3,470.4L672.5,479.3" stroke="#f02818" stroke-width="1.700"/><path d="M681.6,470.4L680.4,479.6" stroke="#f02818" stroke-width="1.700"/><path d="M670.7,470.6L671.8,479" stroke="#ffa090" stroke-width=".6"/><path d="M676.6,470.8C674.5,465 669,464.6 669.8,468.6C670.3,471.3 674,471.4 676.6,470.8C679.2,471.4 682.9,471.3 683.4,468.6C684.2,464.6 678.7,465 676.6,470.8z" fill="#f02818"/><path d="M675.2,469.6C673.8,467 671.4,466.6 671.6,468.2C672,469.6 673.6,469.8 675.2,469.6z" fill="#7a1008"/><path d="M678,469.6C679.4,467 681.8,466.6 681.6,468.2C681.2,469.6 679.6,469.8 678,469.6z" fill="#7a1008"/><ellipse cx="676.6" cy="470.6" rx="2.100" ry="1.700" fill="#ff4030"/>
<polygon points="924.45,468.00 926.74,472.74 931.96,473.46 928.16,477.11 929.09,482.29 924.45,479.80 919.81,482.29 920.74,477.11 916.94,473.46 922.16,472.74" fill="#3abcf8"/>
<polygon points="941.45,468.00 943.74,472.74 948.96,473.46 945.16,477.11 946.09,482.29 941.45,479.80 936.81,482.29 937.74,477.11 933.94,473.46 939.16,472.74" fill="#3abcf8"/>
<polygon points="958.45,468.00 960.74,472.74 965.96,473.46 962.16,477.11 963.09,482.29 958.45,479.80 953.81,482.29 954.74,477.11 950.94,473.46 956.16,472.74" fill="#3abcf8"/>
<polygon points="975.45,468.00 977.74,472.74 982.96,473.46 979.16,477.11 980.09,482.29 975.45,479.80 970.81,482.29 971.74,477.11 967.94,473.46 973.16,472.74" fill="#3abcf8"/>
<polygon points="992.45,468.00 994.74,472.74 999.96,473.46 996.16,477.11 997.09,482.29 992.45,479.80 987.81,482.29 988.74,477.11 984.94,473.46 990.16,472.74" fill="#a6c0b0"/>
<path d="M478.0,534C472.5,529.5 470.5,527 470.5,524.6C470.5,522.2 472.3,521 474.3,521C475.9,521 477.3,521.9 478.0,523.4C478.7,521.9 480.1,521 481.7,521C483.7,521 485.5,522.2 485.5,524.6C485.5,527 483.5,529.5 478.0,534z" fill="#c0392b"/>
<polygon points="668.8,523.3 676.4,525.0 676.3,534.2 669.9,531.0" fill="#2a8cf6"/><polygon points="676.4,525.0 684.8,523.3 683.6,531.0 676.3,534.2" fill="#1874e0"/><polygon points="668.8,523.3 676.6,521.6 684.8,523.3 676.4,525.4" fill="#3a98fa"/><path d="M671.3,523.4L672.5,532.3" stroke="#f02818" stroke-width="1.700"/><path d="M681.6,523.4L680.4,532.6" stroke="#f02818" stroke-width="1.700"/><path d="M670.7,523.6L671.8,532" stroke="#ffa090" stroke-width=".6"/><path d="M676.6,523.8C674.5,518 669,517.6 669.8,521.6C670.3,524.3 674,524.4 676.6,523.8C679.2,524.4 682.9,524.3 683.4,521.6C684.2,517.6 678.7,518 676.6,523.8z" fill="#f02818"/><path d="M675.2,522.6C673.8,520 671.4,519.6 671.6,521.2C672,522.6 673.6,522.8 675.2,522.6z" fill="#7a1008"/><path d="M678,522.6C679.4,520 681.8,519.6 681.6,521.2C681.2,522.6 679.6,522.8 678,522.6z" fill="#7a1008"/><ellipse cx="676.6" cy="523.6" rx="2.100" ry="1.700" fill="#ff4030"/>
<polygon points="924.45,521.00 926.74,525.74 931.96,526.46 928.16,530.11 929.09,535.29 924.45,532.80 919.81,535.29 920.74,530.11 916.94,526.46 922.16,525.74" fill="#3abcf8"/>
<polygon points="941.45,521.00 943.74,525.74 948.96,526.46 945.16,530.11 946.09,535.29 941.45,532.80 936.81,535.29 937.74,530.11 933.94,526.46 939.16,525.74" fill="#3abcf8"/>
<polygon points="958.45,521.00 960.74,525.74 965.96,526.46 962.16,530.11 963.09,535.29 958.45,532.80 953.81,535.29 954.74,530.11 950.94,526.46 956.16,525.74" fill="#3abcf8"/>
<polygon points="975.45,521.00 977.74,525.74 982.96,526.46 979.16,530.11 980.09,535.29 975.45,532.80 970.81,535.29 971.74,530.11 967.94,526.46 973.16,525.74" fill="#3abcf8"/>
<polygon points="992.45,521.00 994.74,525.74 999.96,526.46 996.16,530.11 997.09,535.29 992.45,532.80 987.81,535.29 988.74,530.11 984.94,526.46 990.16,525.74" fill="#3abcf8"/>
<polygon points="668.8,576.3 676.4,578.0 676.3,587.2 669.9,584.0" fill="#2a8cf6"/><polygon points="676.4,578.0 684.8,576.3 683.6,584.0 676.3,587.2" fill="#1874e0"/><polygon points="668.8,576.3 676.6,574.6 684.8,576.3 676.4,578.4" fill="#3a98fa"/><path d="M671.3,576.4L672.5,585.3" stroke="#f02818" stroke-width="1.700"/><path d="M681.6,576.4L680.4,585.6" stroke="#f02818" stroke-width="1.700"/><path d="M670.7,576.6L671.8,585" stroke="#ffa090" stroke-width=".6"/><path d="M676.6,576.8C674.5,571 669,570.6 669.8,574.6C670.3,577.3 674,577.4 676.6,576.8C679.2,577.4 682.9,577.3 683.4,574.6C684.2,570.6 678.7,571 676.6,576.8z" fill="#f02818"/><path d="M675.2,575.6C673.8,573 671.4,572.6 671.6,574.2C672,575.6 673.6,575.8 675.2,575.6z" fill="#7a1008"/><path d="M678,575.6C679.4,573 681.8,572.6 681.6,574.2C681.2,575.6 679.6,575.8 678,575.6z" fill="#7a1008"/><ellipse cx="676.6" cy="576.6" rx="2.100" ry="1.700" fill="#ff4030"/>
<polygon points="924.45,574.00 926.74,578.74 931.96,579.46 928.16,583.11 929.09,588.29 924.45,585.80 919.81,588.29 920.74,583.11 916.94,579.46 922.16,578.74" fill="#3abcf8"/>
<polygon points="941.45,574.00 943.74,578.74 948.96,579.46 945.16,583.11 946.09,588.29 941.45,585.80 936.81,588.29 937.74,583.11 933.94,579.46 939.16,578.74" fill="#a6c0b0"/>
<polygon points="958.45,574.00 960.74,578.74 965.96,579.46 962.16,583.11 963.09,588.29 958.45,585.80 953.81,588.29 954.74,583.11 950.94,579.46 956.16,578.74" fill="#a6c0b0"/>
<polygon points="975.45,574.00 977.74,578.74 982.96,579.46 979.16,583.11 980.09,588.29 975.45,585.80 970.81,588.29 971.74,583.11 967.94,579.46 973.16,578.74" fill="#a6c0b0"/>
<polygon points="992.45,574.00 994.74,578.74 999.96,579.46 996.16,583.11 997.09,588.29 992.45,585.80 987.81,588.29 988.74,583.11 984.94,579.46 990.16,578.74" fill="#a6c0b0"/>
<path d="M445.500,226.500v7.500l3.800,-3.750z" fill="#555"/>
<rect x="32.500" y="651.500" width="23" height="19" rx="1.500" fill="#eef4fc" stroke="#5a80c0"/><rect x="33" y="652" width="22" height="4" fill="#8ab8e8"/><rect x="51" y="653" width="2" height="2" fill="#e04040"/>
<path d="M163,657.500l7.200,6.800M170.200,657.500l-7.200,6.800" stroke="#1c8fe8" stroke-width="2"/>
<rect x="201.5" y="648.5" width="22.5" height="26" rx="1.8" fill="url(#gBook)" stroke="#4a6ca8" stroke-width=".9"/><rect x="201.4" y="648.4" width="22.7" height="1.1" rx=".5" fill="#44546e"/><rect x="204.5" y="649.4" width="19.3" height="2" fill="#f6f9fc"/><rect x="204.5" y="651.4" width="19.3" height=".8" fill="#8eaed0" opacity=".7"/><rect x="201" y="648.4" width="3.6" height="26.2" rx="1.2" fill="url(#gSpine)"/><rect x="204.4" y="650" width="1.5" height="24" fill="#6c88b4"/>
<path d="M295.300,657.500l7.200,6.800M302.500,657.500l-7.200,6.800" stroke="#1c8fe8" stroke-width="2"/>
<circle cx="31" cy="694" r="7.900" fill="#4a82bc"/><text x="31" y="698" text-anchor="middle" font-family="Liberation Sans, sans-serif" font-weight="bold" font-size="11.500" fill="#fff">i</text>
<rect x="209.400" y="686.400" width="11.300" height="14.400" rx="2.600" ry="2" fill="url(#gDb)" stroke="#c47c2c" stroke-width=".9"/><path d="M209.800,691.300q5.300,1.700 10.500,0M209.800,696q5.300,1.700 10.500,0" fill="none" stroke="#b4661c" stroke-width="1" opacity=".85"/><path d="M210.500,688q4.700,-1.600 9.200,0" fill="none" stroke="#fff6dc" stroke-width="1" opacity=".9"/>
<path d="M343.8,700.0q-.2,-4.600 4.800,-5.300h4.800q5,.7 4.800,5.300q-7.200,1.800 -14.400,0z" fill="url(#gGreenP)" stroke="#5a9422" stroke-width=".6"/><path d="M349.2,694.3v2.500q1.800,1.200 3.600,0v-2.500z" fill="#e8b888"/><ellipse cx="351" cy="692.1999999999999" rx="3" ry="4" fill="url(#gSkin)"/><path d="M347.8,694.8q-1.400,-3 -.8,-5.600q1,-2.600 4,-2.600q3,0 4,2.600q.6,2.600 -.8,5.600q.3,-3 -.8,-4.400q-2.600,.5 -4.800,-.5q-.9,1.900 -.8,4.900z" fill="#c07c3c" stroke="#a86428" stroke-width=".4"/>
<rect x="487.500" y="687.500" width="13" height="13" fill="#fff" stroke="#5a70b0"/><rect x="488" y="688" width="12" height="3" fill="#e05050"/><text x="494" y="699.500" text-anchor="middle" font-family="Liberation Serif, serif" font-weight="bold" font-size="10" fill="#2a3a80" letter-spacing="-.3">31</text>
<path d="M1236.500,693v1M1236.500,696v1M1236.500,699v1M1233.500,696v1M1233.500,699v1M1230.500,699v1M1227.500,699v1M1233.500,702v0" stroke="#777" stroke-width="1.400"/>
</svg>
</body>
</html>
